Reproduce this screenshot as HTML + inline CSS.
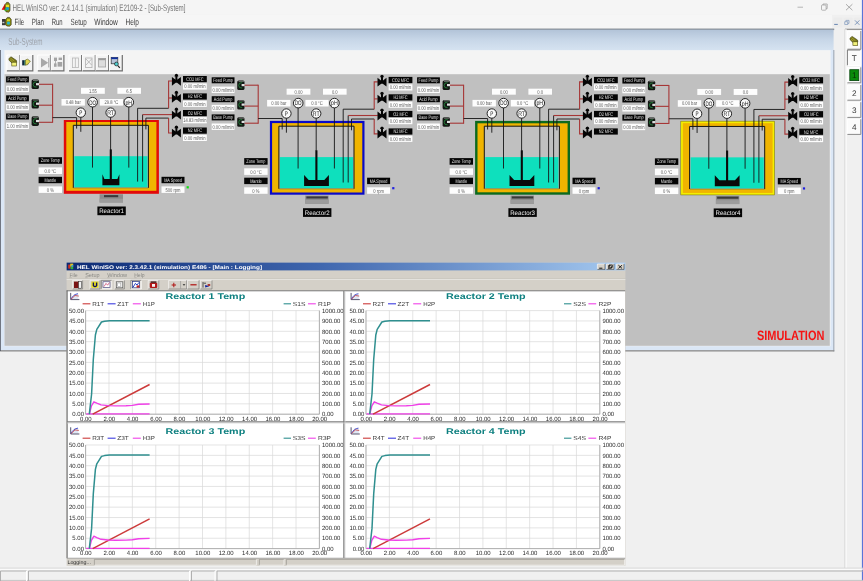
<!DOCTYPE html>
<html lang="en"><head><meta charset="utf-8"><title>HEL WinISO</title>
<style>html,body{margin:0;padding:0;background:#f0f0f0;overflow:hidden}svg{display:block;filter:blur(0.4px);text-rendering:geometricPrecision;font-family:'Liberation Sans', sans-serif}</style></head>
<body>
<svg width="863" height="581" viewBox="0 0 863 581">
<rect x="0.00" y="0.00" width="863.00" height="581.00" fill="#f0f0f0" />
<rect x="0.00" y="0.00" width="863.00" height="14.50" fill="#f5f5f5" />
<rect x="0.00" y="14.50" width="863.00" height="14.00" fill="#f6f6f6" />
<rect x="832.00" y="15.00" width="31.00" height="14.00" fill="#f0f0f0" />
<g transform="translate(1.6,2.2)"><path d="M0 7.6 L3.4 1.6 L4.6 7.8Z" fill="#e81010"/><path d="M3.6 2.2 L5 0.2 L6.8 0.2 L8.4 2.4 L8.4 8.6 L7 10 L4.4 9.6 L3.2 7Z" fill="#8a8a10" stroke="#2a2a0a" stroke-width="0.6"/><rect x="4.2" y="2.6" width="3.4" height="2.4" fill="#e8e020"/><circle cx="5.8" cy="6.4" r="1.7" fill="#18a0d8"/><rect x="3" y="6.6" width="1.8" height="2.2" fill="#30b030"/></g>
<text x="12.50" y="11.10" font-size="9.4" fill="#767676" textLength="173.00" lengthAdjust="spacingAndGlyphs" >HEL WinISO ver: 2.4.14.1 (simulation) E2109-2 - [Sub-System]</text>
<line x1="797.50" y1="7.20" x2="803.00" y2="7.20" stroke="#9a9a9a" stroke-width="0.7" />
<rect x="821.50" y="5.00" width="4.60" height="5.20" fill="none" stroke="#9a9a9a" stroke-width="0.7" rx="0.8"/>
<polyline points="823.00,5.00 823.00,4.00 827.20,4.00 827.20,8.60 826.10,8.60" fill="none" stroke="#9a9a9a" stroke-width="0.7" />
<line x1="846.00" y1="4.20" x2="852.40" y2="10.20" stroke="#8a8a8a" stroke-width="0.7" />
<line x1="852.40" y1="4.20" x2="846.00" y2="10.20" stroke="#8a8a8a" stroke-width="0.7" />
<g transform="translate(2.0,17.2)"><rect x="0" y="1.8" width="3.6" height="6.2" fill="#3a3a3a"/><rect x="0.4" y="4.6" width="2" height="1.4" fill="#c8c8c8"/><path d="M3.6 2.4 L5.4 0.2 L7.6 0.2 L9.2 2.2 L9.2 7.6 L7.6 9 L4.8 8.8 L3.6 7.4Z" fill="#8c8c10" stroke="#2a2a0a" stroke-width="0.6"/><rect x="5" y="2" width="3" height="2" fill="#d8d020"/><circle cx="6.5" cy="5.9" r="1.6" fill="#20b8d8"/></g>
<text x="14.50" y="24.60" font-size="9.0" fill="#3c3c3c" textLength="9.70" lengthAdjust="spacingAndGlyphs" >File</text>
<text x="31.80" y="24.60" font-size="9.0" fill="#3c3c3c" textLength="12.20" lengthAdjust="spacingAndGlyphs" >Plan</text>
<text x="51.80" y="24.60" font-size="9.0" fill="#3c3c3c" textLength="10.80" lengthAdjust="spacingAndGlyphs" >Run</text>
<text x="70.50" y="24.60" font-size="9.0" fill="#3c3c3c" textLength="16.30" lengthAdjust="spacingAndGlyphs" >Setup</text>
<text x="94.20" y="24.60" font-size="9.0" fill="#3c3c3c" textLength="23.60" lengthAdjust="spacingAndGlyphs" >Window</text>
<text x="125.50" y="24.60" font-size="9.0" fill="#3c3c3c" textLength="13.30" lengthAdjust="spacingAndGlyphs" >Help</text>
<rect x="833.40" y="17.60" width="9.20" height="10.00" fill="#ececec" rx="1"/>
<rect x="843.60" y="17.60" width="9.20" height="10.00" fill="#ececec" rx="1"/>
<rect x="853.80" y="17.60" width="9.20" height="10.00" fill="#ececec" rx="1"/>
<line x1="834.20" y1="24.40" x2="837.80" y2="24.40" stroke="#6684b0" stroke-width="1.0" />
<rect x="844.80" y="21.80" width="3.00" height="2.80" fill="none" stroke="#7f98bc" stroke-width="0.7" />
<polyline points="845.90,21.80 845.90,20.40 849.00,20.40 849.00,23.40 847.80,23.40" fill="none" stroke="#7f98bc" stroke-width="0.7" />
<line x1="855.00" y1="20.40" x2="859.40" y2="24.80" stroke="#6684b0" stroke-width="0.8" />
<line x1="859.40" y1="20.40" x2="855.00" y2="24.80" stroke="#6684b0" stroke-width="0.8" />
<rect x="861.90" y="0.00" width="1.10" height="581.00" fill="#5a74d8" />
<rect x="845.00" y="28.70" width="17.00" height="1.20" fill="#8c8c8c" />
<line x1="845.00" y1="29.00" x2="845.00" y2="568.00" stroke="#d0d0d0" stroke-width="1" />
<line x1="846.00" y1="29.00" x2="846.00" y2="568.00" stroke="#ffffff" stroke-width="1" />
<rect x="847.40" y="31.00" width="13.40" height="18.20" fill="#fbfbfb" />
<polyline points="847.40,49.20 847.40,31.00 860.80,31.00" fill="none" stroke="#ffffff" stroke-width="1" />
<polyline points="847.40,49.20 860.80,49.20 860.80,31.00" fill="none" stroke="#8a8a8a" stroke-width="1" />
<g transform="translate(849.90,36.40)"><path d="M0 1.9 L2.2 0 L7.6 3.6 L7.9 5.6 L3.2 6.2 L0.4 3.6Z" fill="#78761a" stroke="#3a3a0a" stroke-width="0.6"/><path d="M1.6 1.2 L5.6 4.4 M0.8 2.6 L4.2 5.4" stroke="#c8c440" stroke-width="0.5" fill="none"/><rect x="3.0" y="5.4" width="4.8" height="3.8" fill="#f2f27c" stroke="#4c4a10" stroke-width="0.6"/></g>
<rect x="847.40" y="50.00" width="13.40" height="15.60" fill="#fbfbfb" />
<polyline points="847.40,65.60 847.40,50.00 860.80,50.00" fill="none" stroke="#7c7c7c" stroke-width="1" />
<polyline points="847.40,65.60 860.80,65.60 860.80,50.00" fill="none" stroke="#ffffff" stroke-width="1" />
<text x="854.20" y="61.10" font-size="8.2" fill="#3a3a3a" text-anchor="middle" >T</text>
<rect x="847.40" y="67.30" width="13.40" height="15.50" fill="#fbfbfb" />
<polyline points="847.40,82.80 847.40,67.30 860.80,67.30" fill="none" stroke="#ffffff" stroke-width="1" />
<polyline points="847.40,82.80 860.80,82.80 860.80,67.30" fill="none" stroke="#8a8a8a" stroke-width="1" />
<rect x="849.80" y="69.70" width="9.00" height="10.90" fill="#0a8a0a" stroke="#04440a" stroke-width="0.8" />
<text x="854.20" y="78.35" font-size="8.2" fill="#063006" text-anchor="middle" >1</text>
<rect x="847.40" y="85.00" width="13.40" height="15.20" fill="#fbfbfb" />
<polyline points="847.40,100.20 847.40,85.00 860.80,85.00" fill="none" stroke="#ffffff" stroke-width="1" />
<polyline points="847.40,100.20 860.80,100.20 860.80,85.00" fill="none" stroke="#8a8a8a" stroke-width="1" />
<text x="854.20" y="95.90" font-size="8.2" fill="#3a3a3a" text-anchor="middle" >2</text>
<rect x="847.40" y="102.20" width="13.40" height="15.20" fill="#fbfbfb" />
<polyline points="847.40,117.40 847.40,102.20 860.80,102.20" fill="none" stroke="#ffffff" stroke-width="1" />
<polyline points="847.40,117.40 860.80,117.40 860.80,102.20" fill="none" stroke="#8a8a8a" stroke-width="1" />
<text x="854.20" y="113.10" font-size="8.2" fill="#3a3a3a" text-anchor="middle" >3</text>
<rect x="847.40" y="119.20" width="13.40" height="15.20" fill="#fbfbfb" />
<polyline points="847.40,134.40 847.40,119.20 860.80,119.20" fill="none" stroke="#ffffff" stroke-width="1" />
<polyline points="847.40,134.40 860.80,134.40 860.80,119.20" fill="none" stroke="#8a8a8a" stroke-width="1" />
<text x="854.20" y="130.10" font-size="8.2" fill="#3a3a3a" text-anchor="middle" >4</text>
<line x1="0.00" y1="580.40" x2="863.00" y2="580.40" stroke="#c4c4c4" stroke-width="1" />
<line x1="0.00" y1="568.20" x2="863.00" y2="568.20" stroke="#d0d0d0" stroke-width="1" />
<line x1="0.00" y1="569.20" x2="863.00" y2="569.20" stroke="#ffffff" stroke-width="1" />
<polyline points="0.50,581.00 0.50,571.00 26.50,571.00" fill="none" stroke="#a8a8a8" stroke-width="0.9" />
<line x1="26.50" y1="571.00" x2="26.50" y2="581.00" stroke="#ffffff" stroke-width="1" />
<polyline points="28.50,581.00 28.50,571.00 189.50,571.00" fill="none" stroke="#a8a8a8" stroke-width="0.9" />
<line x1="189.50" y1="571.00" x2="189.50" y2="581.00" stroke="#ffffff" stroke-width="1" />
<polyline points="191.50,581.00 191.50,571.00 215.00,571.00" fill="none" stroke="#a8a8a8" stroke-width="0.9" />
<line x1="215.00" y1="571.00" x2="215.00" y2="581.00" stroke="#ffffff" stroke-width="1" />
<polyline points="217.00,581.00 217.00,571.00 870.00,571.00" fill="none" stroke="#a8a8a8" stroke-width="0.9" />
<line x1="870.00" y1="571.00" x2="870.00" y2="581.00" stroke="#ffffff" stroke-width="1" />
<defs><linearGradient id="subg" x1="0" y1="0" x2="0" y2="1"><stop offset="0" stop-color="#b2c3d8"/><stop offset="0.5" stop-color="#c8d7e8"/><stop offset="1" stop-color="#d6e3f1"/></linearGradient><linearGradient id="standg" x1="0" y1="0" x2="0" y2="1"><stop offset="0" stop-color="#5a5a5a"/><stop offset="0.45" stop-color="#8c8c8c"/><stop offset="1" stop-color="#b4b4b4"/></linearGradient></defs>
<rect x="0.00" y="28.60" width="834.20" height="1.50" fill="#7c828a" />
<rect x="0.00" y="29.60" width="833.60" height="21.00" fill="url(#subg)" />
<rect x="0.00" y="50.00" width="833.60" height="300.60" fill="#dbe7f6" />
<rect x="833.40" y="50.00" width="0.90" height="301.40" fill="#8e98a8" />
<rect x="0.00" y="350.20" width="834.30" height="1.30" fill="#8a8a8a" />
<rect x="0.00" y="50.00" width="0.75" height="301.00" fill="#4e525c" />
<text x="8.30" y="44.90" font-size="10.2" fill="#9ea3ab" textLength="34.20" lengthAdjust="spacingAndGlyphs" >Sub-System</text>
<rect x="4.40" y="50.20" width="826.20" height="296.00" fill="#f4f4f4" />
<rect x="4.50" y="74.20" width="825.30" height="271.60" fill="#c0c0c0" />
<rect x="6.90" y="55.00" width="12.70" height="15.80" fill="#f3f3f3" />
<polyline points="6.90,70.80 6.90,55.00 19.60,55.00" fill="none" stroke="#ffffff" stroke-width="1" />
<polyline points="6.90,70.80 19.60,70.80 19.60,55.00" fill="none" stroke="#6e6e6e" stroke-width="1.2" />
<rect x="20.10" y="55.00" width="12.70" height="15.80" fill="#f3f3f3" />
<polyline points="20.10,70.80 20.10,55.00 32.80,55.00" fill="none" stroke="#ffffff" stroke-width="1" />
<polyline points="20.10,70.80 32.80,70.80 32.80,55.00" fill="none" stroke="#6e6e6e" stroke-width="1.2" />
<rect x="37.80" y="55.00" width="12.70" height="15.80" fill="#f3f3f3" />
<polyline points="37.80,70.80 37.80,55.00 50.50,55.00" fill="none" stroke="#ffffff" stroke-width="1" />
<polyline points="37.80,70.80 50.50,70.80 50.50,55.00" fill="none" stroke="#6e6e6e" stroke-width="1.2" />
<rect x="51.20" y="55.00" width="12.70" height="15.80" fill="#f3f3f3" />
<polyline points="51.20,70.80 51.20,55.00 63.90,55.00" fill="none" stroke="#ffffff" stroke-width="1" />
<polyline points="51.20,70.80 63.90,70.80 63.90,55.00" fill="none" stroke="#6e6e6e" stroke-width="1.2" />
<rect x="69.00" y="55.00" width="12.70" height="15.80" fill="#f3f3f3" />
<polyline points="69.00,70.80 69.00,55.00 81.70,55.00" fill="none" stroke="#ffffff" stroke-width="1" />
<polyline points="69.00,70.80 81.70,70.80 81.70,55.00" fill="none" stroke="#6e6e6e" stroke-width="1.2" />
<rect x="82.60" y="55.00" width="12.70" height="15.80" fill="#f3f3f3" />
<polyline points="82.60,70.80 82.60,55.00 95.30,55.00" fill="none" stroke="#ffffff" stroke-width="1" />
<polyline points="82.60,70.80 95.30,70.80 95.30,55.00" fill="none" stroke="#6e6e6e" stroke-width="1.2" />
<rect x="96.00" y="55.00" width="12.70" height="15.80" fill="#f3f3f3" />
<polyline points="96.00,70.80 96.00,55.00 108.70,55.00" fill="none" stroke="#ffffff" stroke-width="1" />
<polyline points="96.00,70.80 108.70,70.80 108.70,55.00" fill="none" stroke="#6e6e6e" stroke-width="1.2" />
<rect x="109.60" y="55.00" width="12.70" height="15.80" fill="#f3f3f3" />
<polyline points="109.60,70.80 109.60,55.00 122.30,55.00" fill="none" stroke="#ffffff" stroke-width="1" />
<polyline points="109.60,70.80 122.30,70.80 122.30,55.00" fill="none" stroke="#6e6e6e" stroke-width="1.2" />
<g transform="translate(8.80,56.80)"><path d="M0 1.9 L2.2 0 L7.6 3.6 L7.9 5.6 L3.2 6.2 L0.4 3.6Z" fill="#78761a" stroke="#3a3a0a" stroke-width="0.6"/><path d="M1.6 1.2 L5.6 4.4 M0.8 2.6 L4.2 5.4" stroke="#c8c440" stroke-width="0.5" fill="none"/><rect x="3.0" y="5.4" width="4.8" height="3.8" fill="#f2f27c" stroke="#4c4a10" stroke-width="0.6"/></g>
<g transform="translate(22,59)"><rect x="0.2" y="1.2" width="2.5" height="5.2" fill="#10283a"/><rect x="2.6" y="1.2" width="0.9" height="5.2" fill="#20a078"/><path d="M3.4 1 L5.6 0.2 L7 1.2 L8.4 2.4 L6.6 4 L5.8 5.6 L3.4 6.2Z" fill="#e0d850" stroke="#4a4a10" stroke-width="0.6"/></g>
<path d="M41 58 L41 67.4 L48.2 62.7Z" fill="#a8a8a8"/><rect x="48.2" y="58" width="1.1" height="9.4" fill="#a8a8a8"/>
<g fill="#a4a4a4"><rect x="54" y="57.6" width="3" height="3.4"/><rect x="58.6" y="57.6" width="3.4" height="2.4"/><rect x="57.6" y="62" width="4.6" height="4.6"/><rect x="54" y="63.4" width="2.6" height="3.4"/><rect x="55" y="60" width="0.8" height="4"/></g>
<g fill="none" stroke="#b8b8b8" stroke-width="0.8"><rect x="72.4" y="58" width="6" height="9.6"/><line x1="75.4" y1="58" x2="75.4" y2="67.6"/></g>
<g fill="none" stroke="#b0b0b0" stroke-width="0.8"><rect x="85.6" y="58" width="6.4" height="9.6"/><path d="M86 59 L91.6 65 M91.6 59 L86 65"/></g>
<g><rect x="98.6" y="58.4" width="7" height="8.6" fill="#dcdcdc" stroke="#a0a0a0" stroke-width="0.8"/><rect x="98.6" y="58.4" width="7" height="1.8" fill="#9a9a9a"/></g>
<g><rect x="111.2" y="57.4" width="6.6" height="6.4" fill="#b8c4d8" stroke="#333" stroke-width="0.7"/><rect x="111.2" y="57.4" width="6.6" height="1.7" fill="#1030a0"/><circle cx="116.4" cy="64" r="1.9" fill="#50d0d0" stroke="#222" stroke-width="0.7"/><line x1="117.8" y1="65.6" x2="119.8" y2="67.8" stroke="#222" stroke-width="1.2"/></g>
<text x="756.90" y="339.50" font-size="13.6" fill="#f41414" font-weight="bold" textLength="67.50" lengthAdjust="spacingAndGlyphs" >SIMULATION</text>
<g transform="translate(0.00,0.00)">
<rect x="6.10" y="76.40" width="22.80" height="6.00" fill="#050505" />
<text x="7.62" y="81.22" font-size="5.2" fill="#e4e4e4" textLength="19.76" lengthAdjust="spacingAndGlyphs" >Feed Pump</text>
<rect x="6.10" y="85.70" width="22.80" height="6.40" fill="#fdfdfd" />
<text x="6.84" y="90.88" font-size="5.5" fill="#5a5a5a" textLength="21.32" lengthAdjust="spacingAndGlyphs" >0.00 ml/min</text>
<rect x="6.10" y="95.30" width="22.80" height="6.00" fill="#050505" />
<text x="8.26" y="100.12" font-size="5.2" fill="#e4e4e4" textLength="18.48" lengthAdjust="spacingAndGlyphs" >Acid Pump</text>
<rect x="6.10" y="104.00" width="22.80" height="6.40" fill="#fdfdfd" />
<text x="6.84" y="109.18" font-size="5.5" fill="#5a5a5a" textLength="21.32" lengthAdjust="spacingAndGlyphs" >0.00 ml/min</text>
<rect x="6.10" y="113.50" width="22.80" height="6.00" fill="#050505" />
<text x="7.62" y="118.32" font-size="5.2" fill="#e4e4e4" textLength="19.76" lengthAdjust="spacingAndGlyphs" >Base Pump</text>
<rect x="6.10" y="122.60" width="22.80" height="6.40" fill="#fdfdfd" />
<text x="6.84" y="127.78" font-size="5.5" fill="#5a5a5a" textLength="21.32" lengthAdjust="spacingAndGlyphs" >1.00 ml/min</text>
<g transform="translate(35.40,84.30)"><rect x="-3.8" y="-4.8" width="7.3" height="9.6" rx="1.6" fill="#131713"/><rect x="-2.4" y="-4.5" width="5.4" height="1.2" fill="#6a6e6a"/><path d="M1.2 -2.5 Q-2.3 -2.9 -2.3 0.2 Q-2.3 3.2 1.2 2.8" fill="none" stroke="#23873c" stroke-width="0.85"/><rect x="0.6" y="-1.2" width="3.1" height="2.2" fill="#e0e0e0"/></g>
<g transform="translate(35.40,103.80)"><rect x="-3.8" y="-4.8" width="7.3" height="9.6" rx="1.6" fill="#131713"/><rect x="-2.4" y="-4.5" width="5.4" height="1.2" fill="#6a6e6a"/><path d="M1.2 -2.5 Q-2.3 -2.9 -2.3 0.2 Q-2.3 3.2 1.2 2.8" fill="none" stroke="#23873c" stroke-width="0.85"/><rect x="0.6" y="-1.2" width="3.1" height="2.2" fill="#e0e0e0"/></g>
<g transform="translate(35.40,121.10)"><rect x="-3.8" y="-4.8" width="7.3" height="9.6" rx="1.6" fill="#131713"/><rect x="-2.4" y="-4.5" width="5.4" height="1.2" fill="#6a6e6a"/><path d="M1.2 -2.5 Q-2.3 -2.9 -2.3 0.2 Q-2.3 3.2 1.2 2.8" fill="none" stroke="#23873c" stroke-width="0.85"/><rect x="0.6" y="-1.2" width="3.1" height="2.2" fill="#e0e0e0"/></g>
<line x1="39.00" y1="84.30" x2="52.60" y2="84.30" stroke="#a63636" stroke-width="1.1" />
<line x1="39.00" y1="105.20" x2="52.60" y2="105.20" stroke="#a63636" stroke-width="1.1" />
<line x1="39.00" y1="122.30" x2="52.60" y2="122.30" stroke="#a63636" stroke-width="1.1" />
<line x1="52.60" y1="83.80" x2="52.60" y2="122.80" stroke="#a63636" stroke-width="1.1" />
<rect x="63.80" y="120.00" width="95.10" height="73.80" fill="#e20a0a" />
<rect x="66.30" y="122.00" width="90.10" height="68.80" fill="#f0b400" />
<rect x="73.30" y="125.40" width="75.00" height="62.30" fill="#c0c0c0" />
<rect x="74.30" y="156.20" width="73.20" height="31.20" fill="#0ee0bd" />
<polyline points="73.30,187.90 73.30,125.30 148.40,125.30 148.40,187.90" fill="none" stroke="#151515" stroke-width="1.0" />
<line x1="73.30" y1="187.90" x2="148.40" y2="187.90" stroke="#6a6a40" stroke-width="0.6" />
<polyline points="52.60,117.60 76.60,117.60 76.60,128.60" fill="none" stroke="#151515" stroke-width="0.9" />
<polyline points="137.60,181.60 137.60,108.30 168.60,108.30" fill="none" stroke="#151515" stroke-width="0.9" />
<line x1="142.60" y1="181.60" x2="142.60" y2="114.60" stroke="#151515" stroke-width="0.9" />
<polyline points="145.90,129.40 145.90,118.10 168.60,118.10" fill="none" stroke="#151515" stroke-width="0.9" />
<polyline points="172.20,81.00 168.60,81.00 168.60,108.30" fill="none" stroke="#a63636" stroke-width="1.1" />
<line x1="168.60" y1="98.00" x2="172.20" y2="98.00" stroke="#a63636" stroke-width="1.1" />
<line x1="142.60" y1="114.60" x2="172.20" y2="114.60" stroke="#a63636" stroke-width="1.1" />
<polyline points="168.60,118.00 168.60,133.00 172.20,133.00" fill="none" stroke="#a63636" stroke-width="1.1" />
<line x1="80.80" y1="117.00" x2="80.80" y2="131.80" stroke="#151515" stroke-width="0.9" />
<line x1="92.50" y1="107.00" x2="92.50" y2="167.60" stroke="#151515" stroke-width="0.9" />
<line x1="128.80" y1="107.00" x2="128.80" y2="167.60" stroke="#151515" stroke-width="0.9" />
<line x1="110.60" y1="117.00" x2="110.60" y2="150.00" stroke="#151515" stroke-width="0.9" />
<rect x="109.75" y="149.40" width="2.10" height="30.60" fill="#0a0a0a" />
<path d="M102.4 174.2 L104.4 179.0 L117.4 179.0 L119.4 174.2 L119.4 185.2 L102.4 185.2Z" fill="#0a0a0a"/>
<circle cx="80.80" cy="112.60" r="4.7" fill="#fafafa" stroke="#1a1a1a" stroke-width="0.95"/>
<text x="79.25" y="114.90" font-size="6.6" fill="#1c1c1c" textLength="3.10" lengthAdjust="spacingAndGlyphs" >P</text>
<circle cx="92.60" cy="102.20" r="4.8" fill="#fafafa" stroke="#1a1a1a" stroke-width="0.95"/>
<text x="89.20" y="104.50" font-size="6.6" fill="#1c1c1c" textLength="6.80" lengthAdjust="spacingAndGlyphs" >DO</text>
<circle cx="110.60" cy="112.60" r="4.7" fill="#fafafa" stroke="#1a1a1a" stroke-width="0.95"/>
<text x="107.20" y="114.90" font-size="6.6" fill="#1c1c1c" textLength="6.80" lengthAdjust="spacingAndGlyphs" >RT</text>
<circle cx="128.80" cy="102.20" r="4.8" fill="#fafafa" stroke="#1a1a1a" stroke-width="0.95"/>
<text x="125.40" y="104.50" font-size="6.6" fill="#1c1c1c" textLength="6.80" lengthAdjust="spacingAndGlyphs" >pH</text>
<rect x="81.00" y="87.80" width="23.80" height="6.00" fill="#fdfdfd" />
<text x="88.89" y="92.78" font-size="5.5" fill="#5a5a5a" textLength="8.03" lengthAdjust="spacingAndGlyphs" >1.55</text>
<rect x="117.40" y="87.80" width="23.60" height="6.00" fill="#fdfdfd" />
<text x="126.33" y="92.78" font-size="5.5" fill="#5a5a5a" textLength="5.73" lengthAdjust="spacingAndGlyphs" >6.5</text>
<rect x="61.50" y="99.00" width="23.40" height="6.60" fill="#fdfdfd" />
<text x="65.63" y="104.28" font-size="5.5" fill="#5a5a5a" textLength="15.13" lengthAdjust="spacingAndGlyphs" >0.48 bar</text>
<rect x="99.80" y="99.00" width="23.20" height="6.60" fill="#fdfdfd" />
<text x="104.50" y="104.28" font-size="5.5" fill="#5a5a5a" textLength="13.80" lengthAdjust="spacingAndGlyphs" >29.8 °C</text>
<g transform="translate(176.40,80.80)" fill="#050505"><path d="M-4.5 -3.9 L-0.7 -1.0 L0.7 -1.0 L4.5 -3.9 L4.5 4.9 L0.7 2.0 L-0.7 2.0 L-4.5 4.9Z"/><rect x="-1.0" y="-5.0" width="2.0" height="6"/><path d="M-1.9 -4.4 Q-1.9 -7.0 0 -7.0 Q1.9 -7.0 1.9 -4.4Z"/></g>
<g transform="translate(176.40,97.80)" fill="#050505"><path d="M-4.5 -3.9 L-0.7 -1.0 L0.7 -1.0 L4.5 -3.9 L4.5 4.9 L0.7 2.0 L-0.7 2.0 L-4.5 4.9Z"/><rect x="-1.0" y="-5.0" width="2.0" height="6"/><path d="M-1.9 -4.4 Q-1.9 -7.0 0 -7.0 Q1.9 -7.0 1.9 -4.4Z"/></g>
<g transform="translate(176.40,114.60)" fill="#050505"><path d="M-4.5 -3.9 L-0.7 -1.0 L0.7 -1.0 L4.5 -3.9 L4.5 4.9 L0.7 2.0 L-0.7 2.0 L-4.5 4.9Z"/><rect x="-1.0" y="-5.0" width="2.0" height="6"/><path d="M-1.9 -4.4 Q-1.9 -7.0 0 -7.0 Q1.9 -7.0 1.9 -4.4Z"/></g>
<g transform="translate(176.40,132.60)" fill="#050505"><path d="M-4.5 -3.9 L-0.7 -1.0 L0.7 -1.0 L4.5 -3.9 L4.5 4.9 L0.7 2.0 L-0.7 2.0 L-4.5 4.9Z"/><rect x="-1.0" y="-5.0" width="2.0" height="6"/><path d="M-1.9 -4.4 Q-1.9 -7.0 0 -7.0 Q1.9 -7.0 1.9 -4.4Z"/></g>
<rect x="183.00" y="76.00" width="23.80" height="6.20" fill="#050505" />
<text x="186.30" y="80.92" font-size="5.2" fill="#e4e4e4" textLength="17.20" lengthAdjust="spacingAndGlyphs" >CO2 MFC</text>
<rect x="183.00" y="83.40" width="23.80" height="6.20" fill="#fdfdfd" />
<text x="184.24" y="88.48" font-size="5.5" fill="#5a5a5a" textLength="21.32" lengthAdjust="spacingAndGlyphs" >0.00 ml/min</text>
<rect x="183.00" y="93.40" width="23.80" height="6.20" fill="#050505" />
<text x="187.79" y="98.32" font-size="5.2" fill="#e4e4e4" textLength="14.23" lengthAdjust="spacingAndGlyphs" >H2 MFC</text>
<rect x="183.00" y="100.70" width="23.80" height="6.20" fill="#fdfdfd" />
<text x="184.24" y="105.78" font-size="5.5" fill="#5a5a5a" textLength="21.32" lengthAdjust="spacingAndGlyphs" >0.00 ml/min</text>
<rect x="183.00" y="110.00" width="23.80" height="6.20" fill="#050505" />
<text x="187.68" y="114.92" font-size="5.2" fill="#e4e4e4" textLength="14.44" lengthAdjust="spacingAndGlyphs" >O2 MFC</text>
<rect x="183.00" y="117.10" width="23.80" height="6.20" fill="#fdfdfd" />
<text x="183.30" y="122.18" font-size="5.5" fill="#5a5a5a" textLength="23.20" lengthAdjust="spacingAndGlyphs" >14.83 ml/min</text>
<rect x="183.00" y="127.50" width="23.80" height="6.20" fill="#050505" />
<text x="187.79" y="132.42" font-size="5.2" fill="#e4e4e4" textLength="14.23" lengthAdjust="spacingAndGlyphs" >N2 MFC</text>
<rect x="183.00" y="134.80" width="23.80" height="6.20" fill="#fdfdfd" />
<text x="184.24" y="139.88" font-size="5.5" fill="#5a5a5a" textLength="21.32" lengthAdjust="spacingAndGlyphs" >0.00 ml/min</text>
<rect x="38.60" y="157.20" width="23.40" height="6.60" fill="#050505" />
<text x="40.78" y="162.32" font-size="5.2" fill="#e4e4e4" textLength="19.05" lengthAdjust="spacingAndGlyphs" >Zone Temp</text>
<rect x="38.60" y="167.40" width="23.40" height="6.60" fill="#fdfdfd" />
<text x="44.55" y="172.68" font-size="5.5" fill="#5a5a5a" textLength="11.51" lengthAdjust="spacingAndGlyphs" >0.0 °C</text>
<rect x="38.60" y="176.80" width="23.40" height="6.40" fill="#050505" />
<text x="44.56" y="181.82" font-size="5.2" fill="#e4e4e4" textLength="11.47" lengthAdjust="spacingAndGlyphs" >Mantle</text>
<rect x="38.60" y="186.40" width="23.40" height="6.50" fill="#fdfdfd" />
<text x="46.75" y="191.63" font-size="5.5" fill="#5a5a5a" textLength="7.11" lengthAdjust="spacingAndGlyphs" >0 %</text>
<rect x="161.50" y="176.80" width="23.00" height="6.40" fill="#050505" />
<text x="164.18" y="181.82" font-size="5.2" fill="#e4e4e4" textLength="17.63" lengthAdjust="spacingAndGlyphs" >MA Speed</text>
<rect x="161.50" y="186.40" width="23.00" height="6.50" fill="#fdfdfd" />
<text x="165.43" y="191.63" font-size="5.5" fill="#5a5a5a" textLength="15.13" lengthAdjust="spacingAndGlyphs" >500 rpm</text>
<rect x="186.60" y="186.20" width="2.20" height="2.20" fill="#10e010" />
<g transform="translate(0,0.10)"><rect x="99.6" y="194.2" width="23.4" height="8.2" fill="#8c8c8c"/><rect x="99.6" y="198.6" width="23.4" height="3.8" fill="#9c9c9c"/>
<rect x="104.00" y="195.00" width="14.20" height="2.10" fill="#3a3a3a" />
</g>
<rect x="97.40" y="206.50" width="28.40" height="8.70" fill="#050505" />
<text x="99.20" y="213.40" font-size="6.4" fill="#f0f0f0" textLength="24.80" lengthAdjust="spacingAndGlyphs" >Reactor1</text>
</g>
<g transform="translate(205.60,0.90)">
<rect x="6.10" y="76.40" width="22.80" height="6.00" fill="#050505" />
<text x="7.62" y="81.22" font-size="5.2" fill="#e4e4e4" textLength="19.76" lengthAdjust="spacingAndGlyphs" >Feed Pump</text>
<rect x="6.10" y="85.70" width="22.80" height="6.40" fill="#fdfdfd" />
<text x="6.84" y="90.88" font-size="5.5" fill="#5a5a5a" textLength="21.32" lengthAdjust="spacingAndGlyphs" >0.00 ml/min</text>
<rect x="6.10" y="95.30" width="22.80" height="6.00" fill="#050505" />
<text x="8.26" y="100.12" font-size="5.2" fill="#e4e4e4" textLength="18.48" lengthAdjust="spacingAndGlyphs" >Acid Pump</text>
<rect x="6.10" y="104.00" width="22.80" height="6.40" fill="#fdfdfd" />
<text x="6.84" y="109.18" font-size="5.5" fill="#5a5a5a" textLength="21.32" lengthAdjust="spacingAndGlyphs" >0.00 ml/min</text>
<rect x="6.10" y="113.50" width="22.80" height="6.00" fill="#050505" />
<text x="7.62" y="118.32" font-size="5.2" fill="#e4e4e4" textLength="19.76" lengthAdjust="spacingAndGlyphs" >Base Pump</text>
<rect x="6.10" y="122.60" width="22.80" height="6.40" fill="#fdfdfd" />
<text x="6.84" y="127.78" font-size="5.5" fill="#5a5a5a" textLength="21.32" lengthAdjust="spacingAndGlyphs" >0.00 ml/min</text>
<g transform="translate(35.40,84.30)"><rect x="-3.8" y="-4.8" width="7.3" height="9.6" rx="1.6" fill="#131713"/><rect x="-2.4" y="-4.5" width="5.4" height="1.2" fill="#6a6e6a"/><path d="M1.2 -2.5 Q-2.3 -2.9 -2.3 0.2 Q-2.3 3.2 1.2 2.8" fill="none" stroke="#23873c" stroke-width="0.85"/><rect x="0.6" y="-1.2" width="3.1" height="2.2" fill="#e0e0e0"/></g>
<g transform="translate(35.40,103.80)"><rect x="-3.8" y="-4.8" width="7.3" height="9.6" rx="1.6" fill="#131713"/><rect x="-2.4" y="-4.5" width="5.4" height="1.2" fill="#6a6e6a"/><path d="M1.2 -2.5 Q-2.3 -2.9 -2.3 0.2 Q-2.3 3.2 1.2 2.8" fill="none" stroke="#23873c" stroke-width="0.85"/><rect x="0.6" y="-1.2" width="3.1" height="2.2" fill="#e0e0e0"/></g>
<g transform="translate(35.40,121.10)"><rect x="-3.8" y="-4.8" width="7.3" height="9.6" rx="1.6" fill="#131713"/><rect x="-2.4" y="-4.5" width="5.4" height="1.2" fill="#6a6e6a"/><path d="M1.2 -2.5 Q-2.3 -2.9 -2.3 0.2 Q-2.3 3.2 1.2 2.8" fill="none" stroke="#23873c" stroke-width="0.85"/><rect x="0.6" y="-1.2" width="3.1" height="2.2" fill="#e0e0e0"/></g>
<line x1="39.00" y1="84.30" x2="52.60" y2="84.30" stroke="#a63636" stroke-width="1.1" />
<line x1="39.00" y1="105.20" x2="52.60" y2="105.20" stroke="#a63636" stroke-width="1.1" />
<line x1="39.00" y1="122.30" x2="52.60" y2="122.30" stroke="#a63636" stroke-width="1.1" />
<line x1="52.60" y1="83.80" x2="52.60" y2="122.80" stroke="#a63636" stroke-width="1.1" />
<rect x="64.30" y="120.00" width="94.60" height="73.80" fill="#0a0ac8" />
<rect x="66.50" y="122.20" width="90.20" height="69.40" fill="#f0b400" />
<rect x="73.30" y="125.40" width="75.00" height="62.30" fill="#c0c0c0" />
<rect x="74.30" y="156.20" width="73.20" height="31.20" fill="#0ee0bd" />
<polyline points="73.30,187.90 73.30,125.30 148.40,125.30 148.40,187.90" fill="none" stroke="#151515" stroke-width="1.0" />
<line x1="73.30" y1="187.90" x2="148.40" y2="187.90" stroke="#6a6a40" stroke-width="0.6" />
<polyline points="52.60,117.60 76.60,117.60 76.60,128.60" fill="none" stroke="#151515" stroke-width="0.9" />
<polyline points="137.60,181.60 137.60,108.30 168.60,108.30" fill="none" stroke="#151515" stroke-width="0.9" />
<line x1="142.60" y1="181.60" x2="142.60" y2="114.60" stroke="#151515" stroke-width="0.9" />
<polyline points="145.90,129.40 145.90,118.10 168.60,118.10" fill="none" stroke="#151515" stroke-width="0.9" />
<polyline points="172.20,81.00 168.60,81.00 168.60,108.30" fill="none" stroke="#a63636" stroke-width="1.1" />
<line x1="168.60" y1="98.00" x2="172.20" y2="98.00" stroke="#a63636" stroke-width="1.1" />
<line x1="142.60" y1="114.60" x2="172.20" y2="114.60" stroke="#a63636" stroke-width="1.1" />
<polyline points="168.60,118.00 168.60,133.00 172.20,133.00" fill="none" stroke="#a63636" stroke-width="1.1" />
<line x1="80.80" y1="117.00" x2="80.80" y2="131.80" stroke="#151515" stroke-width="0.9" />
<line x1="92.50" y1="107.00" x2="92.50" y2="167.60" stroke="#151515" stroke-width="0.9" />
<line x1="128.80" y1="107.00" x2="128.80" y2="167.60" stroke="#151515" stroke-width="0.9" />
<line x1="110.60" y1="117.00" x2="110.60" y2="150.00" stroke="#151515" stroke-width="0.9" />
<rect x="109.75" y="149.40" width="2.10" height="30.60" fill="#0a0a0a" />
<path d="M98.5 174.2 L103.1 179.0 L118.7 179.0 L123.3 174.2 L123.3 185.2 L98.5 185.2Z" fill="#0a0a0a"/>
<circle cx="80.80" cy="112.60" r="4.7" fill="#fafafa" stroke="#1a1a1a" stroke-width="0.95"/>
<text x="79.25" y="114.90" font-size="6.6" fill="#1c1c1c" textLength="3.10" lengthAdjust="spacingAndGlyphs" >P</text>
<circle cx="92.60" cy="102.20" r="4.8" fill="#fafafa" stroke="#1a1a1a" stroke-width="0.95"/>
<text x="89.20" y="104.50" font-size="6.6" fill="#1c1c1c" textLength="6.80" lengthAdjust="spacingAndGlyphs" >DO</text>
<circle cx="110.60" cy="112.60" r="4.7" fill="#fafafa" stroke="#1a1a1a" stroke-width="0.95"/>
<text x="107.20" y="114.90" font-size="6.6" fill="#1c1c1c" textLength="6.80" lengthAdjust="spacingAndGlyphs" >RT</text>
<circle cx="128.80" cy="102.20" r="4.8" fill="#fafafa" stroke="#1a1a1a" stroke-width="0.95"/>
<text x="125.40" y="104.50" font-size="6.6" fill="#1c1c1c" textLength="6.80" lengthAdjust="spacingAndGlyphs" >pH</text>
<rect x="81.00" y="87.80" width="23.80" height="6.00" fill="#fdfdfd" />
<text x="88.89" y="92.78" font-size="5.5" fill="#5a5a5a" textLength="8.03" lengthAdjust="spacingAndGlyphs" >0.00</text>
<rect x="117.40" y="87.80" width="23.60" height="6.00" fill="#fdfdfd" />
<text x="126.33" y="92.78" font-size="5.5" fill="#5a5a5a" textLength="5.73" lengthAdjust="spacingAndGlyphs" >0.0</text>
<rect x="61.50" y="99.00" width="23.40" height="6.60" fill="#fdfdfd" />
<text x="65.63" y="104.28" font-size="5.5" fill="#5a5a5a" textLength="15.13" lengthAdjust="spacingAndGlyphs" >0.00 bar</text>
<rect x="99.80" y="99.00" width="23.20" height="6.60" fill="#fdfdfd" />
<text x="105.65" y="104.28" font-size="5.5" fill="#5a5a5a" textLength="11.51" lengthAdjust="spacingAndGlyphs" >0.0 °C</text>
<g transform="translate(176.40,80.80)" fill="#050505"><path d="M-4.5 -3.9 L-0.7 -1.0 L0.7 -1.0 L4.5 -3.9 L4.5 4.9 L0.7 2.0 L-0.7 2.0 L-4.5 4.9Z"/><rect x="-1.0" y="-5.0" width="2.0" height="6"/><path d="M-1.9 -4.4 Q-1.9 -7.0 0 -7.0 Q1.9 -7.0 1.9 -4.4Z"/></g>
<g transform="translate(176.40,97.80)" fill="#050505"><path d="M-4.5 -3.9 L-0.7 -1.0 L0.7 -1.0 L4.5 -3.9 L4.5 4.9 L0.7 2.0 L-0.7 2.0 L-4.5 4.9Z"/><rect x="-1.0" y="-5.0" width="2.0" height="6"/><path d="M-1.9 -4.4 Q-1.9 -7.0 0 -7.0 Q1.9 -7.0 1.9 -4.4Z"/></g>
<g transform="translate(176.40,114.60)" fill="#050505"><path d="M-4.5 -3.9 L-0.7 -1.0 L0.7 -1.0 L4.5 -3.9 L4.5 4.9 L0.7 2.0 L-0.7 2.0 L-4.5 4.9Z"/><rect x="-1.0" y="-5.0" width="2.0" height="6"/><path d="M-1.9 -4.4 Q-1.9 -7.0 0 -7.0 Q1.9 -7.0 1.9 -4.4Z"/></g>
<g transform="translate(176.40,132.60)" fill="#050505"><path d="M-4.5 -3.9 L-0.7 -1.0 L0.7 -1.0 L4.5 -3.9 L4.5 4.9 L0.7 2.0 L-0.7 2.0 L-4.5 4.9Z"/><rect x="-1.0" y="-5.0" width="2.0" height="6"/><path d="M-1.9 -4.4 Q-1.9 -7.0 0 -7.0 Q1.9 -7.0 1.9 -4.4Z"/></g>
<rect x="183.00" y="76.00" width="23.80" height="6.20" fill="#050505" />
<text x="186.30" y="80.92" font-size="5.2" fill="#e4e4e4" textLength="17.20" lengthAdjust="spacingAndGlyphs" >CO2 MFC</text>
<rect x="183.00" y="83.40" width="23.80" height="6.20" fill="#fdfdfd" />
<text x="184.24" y="88.48" font-size="5.5" fill="#5a5a5a" textLength="21.32" lengthAdjust="spacingAndGlyphs" >0.00 ml/min</text>
<rect x="183.00" y="93.40" width="23.80" height="6.20" fill="#050505" />
<text x="187.79" y="98.32" font-size="5.2" fill="#e4e4e4" textLength="14.23" lengthAdjust="spacingAndGlyphs" >H2 MFC</text>
<rect x="183.00" y="100.70" width="23.80" height="6.20" fill="#fdfdfd" />
<text x="184.24" y="105.78" font-size="5.5" fill="#5a5a5a" textLength="21.32" lengthAdjust="spacingAndGlyphs" >0.00 ml/min</text>
<rect x="183.00" y="110.00" width="23.80" height="6.20" fill="#050505" />
<text x="187.68" y="114.92" font-size="5.2" fill="#e4e4e4" textLength="14.44" lengthAdjust="spacingAndGlyphs" >O2 MFC</text>
<rect x="183.00" y="117.10" width="23.80" height="6.20" fill="#fdfdfd" />
<text x="184.24" y="122.18" font-size="5.5" fill="#5a5a5a" textLength="21.32" lengthAdjust="spacingAndGlyphs" >0.00 ml/min</text>
<rect x="183.00" y="127.50" width="23.80" height="6.20" fill="#050505" />
<text x="187.79" y="132.42" font-size="5.2" fill="#e4e4e4" textLength="14.23" lengthAdjust="spacingAndGlyphs" >N2 MFC</text>
<rect x="183.00" y="134.80" width="23.80" height="6.20" fill="#fdfdfd" />
<text x="184.24" y="139.88" font-size="5.5" fill="#5a5a5a" textLength="21.32" lengthAdjust="spacingAndGlyphs" >0.00 ml/min</text>
<rect x="38.60" y="157.20" width="23.40" height="6.60" fill="#050505" />
<text x="40.78" y="162.32" font-size="5.2" fill="#e4e4e4" textLength="19.05" lengthAdjust="spacingAndGlyphs" >Zone Temp</text>
<rect x="38.60" y="167.40" width="23.40" height="6.60" fill="#fdfdfd" />
<text x="44.55" y="172.68" font-size="5.5" fill="#5a5a5a" textLength="11.51" lengthAdjust="spacingAndGlyphs" >0.0 °C</text>
<rect x="38.60" y="176.80" width="23.40" height="6.40" fill="#050505" />
<text x="44.56" y="181.82" font-size="5.2" fill="#e4e4e4" textLength="11.47" lengthAdjust="spacingAndGlyphs" >Mantle</text>
<rect x="38.60" y="186.40" width="23.40" height="6.50" fill="#fdfdfd" />
<text x="46.75" y="191.63" font-size="5.5" fill="#5a5a5a" textLength="7.11" lengthAdjust="spacingAndGlyphs" >0 %</text>
<rect x="161.50" y="176.80" width="23.00" height="6.40" fill="#050505" />
<text x="164.18" y="181.82" font-size="5.2" fill="#e4e4e4" textLength="17.63" lengthAdjust="spacingAndGlyphs" >MA Speed</text>
<rect x="161.50" y="186.40" width="23.00" height="6.50" fill="#fdfdfd" />
<text x="167.73" y="191.63" font-size="5.5" fill="#5a5a5a" textLength="10.54" lengthAdjust="spacingAndGlyphs" >0 rpm</text>
<rect x="186.60" y="186.20" width="2.20" height="2.20" fill="#2020e0" />
<g transform="translate(0,0.50)"><rect x="99.6" y="194.2" width="23.4" height="8.2" fill="#8c8c8c"/><rect x="99.6" y="198.6" width="23.4" height="3.8" fill="#9c9c9c"/>
<rect x="100.80" y="195.00" width="21.40" height="2.10" fill="#3a3a3a" />
</g>
<rect x="97.40" y="207.30" width="28.40" height="8.70" fill="#050505" />
<text x="99.20" y="214.20" font-size="6.4" fill="#f0f0f0" textLength="24.80" lengthAdjust="spacingAndGlyphs" >Reactor2</text>
</g>
<g transform="translate(411.00,0.90)">
<rect x="6.10" y="76.40" width="22.80" height="6.00" fill="#050505" />
<text x="7.62" y="81.22" font-size="5.2" fill="#e4e4e4" textLength="19.76" lengthAdjust="spacingAndGlyphs" >Feed Pump</text>
<rect x="6.10" y="85.70" width="22.80" height="6.40" fill="#fdfdfd" />
<text x="6.84" y="90.88" font-size="5.5" fill="#5a5a5a" textLength="21.32" lengthAdjust="spacingAndGlyphs" >0.00 ml/min</text>
<rect x="6.10" y="95.30" width="22.80" height="6.00" fill="#050505" />
<text x="8.26" y="100.12" font-size="5.2" fill="#e4e4e4" textLength="18.48" lengthAdjust="spacingAndGlyphs" >Acid Pump</text>
<rect x="6.10" y="104.00" width="22.80" height="6.40" fill="#fdfdfd" />
<text x="6.84" y="109.18" font-size="5.5" fill="#5a5a5a" textLength="21.32" lengthAdjust="spacingAndGlyphs" >0.00 ml/min</text>
<rect x="6.10" y="113.50" width="22.80" height="6.00" fill="#050505" />
<text x="7.62" y="118.32" font-size="5.2" fill="#e4e4e4" textLength="19.76" lengthAdjust="spacingAndGlyphs" >Base Pump</text>
<rect x="6.10" y="122.60" width="22.80" height="6.40" fill="#fdfdfd" />
<text x="6.84" y="127.78" font-size="5.5" fill="#5a5a5a" textLength="21.32" lengthAdjust="spacingAndGlyphs" >0.00 ml/min</text>
<g transform="translate(35.40,84.30)"><rect x="-3.8" y="-4.8" width="7.3" height="9.6" rx="1.6" fill="#131713"/><rect x="-2.4" y="-4.5" width="5.4" height="1.2" fill="#6a6e6a"/><path d="M1.2 -2.5 Q-2.3 -2.9 -2.3 0.2 Q-2.3 3.2 1.2 2.8" fill="none" stroke="#23873c" stroke-width="0.85"/><rect x="0.6" y="-1.2" width="3.1" height="2.2" fill="#e0e0e0"/></g>
<g transform="translate(35.40,103.80)"><rect x="-3.8" y="-4.8" width="7.3" height="9.6" rx="1.6" fill="#131713"/><rect x="-2.4" y="-4.5" width="5.4" height="1.2" fill="#6a6e6a"/><path d="M1.2 -2.5 Q-2.3 -2.9 -2.3 0.2 Q-2.3 3.2 1.2 2.8" fill="none" stroke="#23873c" stroke-width="0.85"/><rect x="0.6" y="-1.2" width="3.1" height="2.2" fill="#e0e0e0"/></g>
<g transform="translate(35.40,121.10)"><rect x="-3.8" y="-4.8" width="7.3" height="9.6" rx="1.6" fill="#131713"/><rect x="-2.4" y="-4.5" width="5.4" height="1.2" fill="#6a6e6a"/><path d="M1.2 -2.5 Q-2.3 -2.9 -2.3 0.2 Q-2.3 3.2 1.2 2.8" fill="none" stroke="#23873c" stroke-width="0.85"/><rect x="0.6" y="-1.2" width="3.1" height="2.2" fill="#e0e0e0"/></g>
<line x1="39.00" y1="84.30" x2="52.60" y2="84.30" stroke="#a63636" stroke-width="1.1" />
<line x1="39.00" y1="105.20" x2="52.60" y2="105.20" stroke="#a63636" stroke-width="1.1" />
<line x1="39.00" y1="122.30" x2="52.60" y2="122.30" stroke="#a63636" stroke-width="1.1" />
<line x1="52.60" y1="83.80" x2="52.60" y2="122.80" stroke="#a63636" stroke-width="1.1" />
<rect x="64.10" y="120.00" width="94.90" height="73.80" fill="#0c6a1e" />
<rect x="66.50" y="122.40" width="90.10" height="69.00" fill="#f0b400" />
<rect x="73.30" y="125.40" width="75.00" height="62.30" fill="#c0c0c0" />
<rect x="74.30" y="156.20" width="73.20" height="31.20" fill="#0ee0bd" />
<polyline points="73.30,187.90 73.30,125.30 148.40,125.30 148.40,187.90" fill="none" stroke="#151515" stroke-width="1.0" />
<line x1="73.30" y1="187.90" x2="148.40" y2="187.90" stroke="#6a6a40" stroke-width="0.6" />
<polyline points="52.60,117.60 76.60,117.60 76.60,128.60" fill="none" stroke="#151515" stroke-width="0.9" />
<polyline points="137.60,181.60 137.60,108.30 168.60,108.30" fill="none" stroke="#151515" stroke-width="0.9" />
<line x1="142.60" y1="181.60" x2="142.60" y2="114.60" stroke="#151515" stroke-width="0.9" />
<polyline points="145.90,129.40 145.90,118.10 168.60,118.10" fill="none" stroke="#151515" stroke-width="0.9" />
<polyline points="172.20,81.00 168.60,81.00 168.60,108.30" fill="none" stroke="#a63636" stroke-width="1.1" />
<line x1="168.60" y1="98.00" x2="172.20" y2="98.00" stroke="#a63636" stroke-width="1.1" />
<line x1="142.60" y1="114.60" x2="172.20" y2="114.60" stroke="#a63636" stroke-width="1.1" />
<polyline points="168.60,118.00 168.60,133.00 172.20,133.00" fill="none" stroke="#a63636" stroke-width="1.1" />
<line x1="80.80" y1="117.00" x2="80.80" y2="131.80" stroke="#151515" stroke-width="0.9" />
<line x1="92.50" y1="107.00" x2="92.50" y2="167.60" stroke="#151515" stroke-width="0.9" />
<line x1="128.80" y1="107.00" x2="128.80" y2="167.60" stroke="#151515" stroke-width="0.9" />
<line x1="110.60" y1="117.00" x2="110.60" y2="150.00" stroke="#151515" stroke-width="0.9" />
<rect x="109.75" y="149.40" width="2.10" height="30.60" fill="#0a0a0a" />
<path d="M98.5 174.2 L103.1 179.0 L118.7 179.0 L123.3 174.2 L123.3 185.2 L98.5 185.2Z" fill="#0a0a0a"/>
<circle cx="80.80" cy="112.60" r="4.7" fill="#fafafa" stroke="#1a1a1a" stroke-width="0.95"/>
<text x="79.25" y="114.90" font-size="6.6" fill="#1c1c1c" textLength="3.10" lengthAdjust="spacingAndGlyphs" >P</text>
<circle cx="92.60" cy="102.20" r="4.8" fill="#fafafa" stroke="#1a1a1a" stroke-width="0.95"/>
<text x="89.20" y="104.50" font-size="6.6" fill="#1c1c1c" textLength="6.80" lengthAdjust="spacingAndGlyphs" >DO</text>
<circle cx="110.60" cy="112.60" r="4.7" fill="#fafafa" stroke="#1a1a1a" stroke-width="0.95"/>
<text x="107.20" y="114.90" font-size="6.6" fill="#1c1c1c" textLength="6.80" lengthAdjust="spacingAndGlyphs" >RT</text>
<circle cx="128.80" cy="102.20" r="4.8" fill="#fafafa" stroke="#1a1a1a" stroke-width="0.95"/>
<text x="125.40" y="104.50" font-size="6.6" fill="#1c1c1c" textLength="6.80" lengthAdjust="spacingAndGlyphs" >pH</text>
<rect x="81.00" y="87.80" width="23.80" height="6.00" fill="#fdfdfd" />
<text x="88.89" y="92.78" font-size="5.5" fill="#5a5a5a" textLength="8.03" lengthAdjust="spacingAndGlyphs" >0.00</text>
<rect x="117.40" y="87.80" width="23.60" height="6.00" fill="#fdfdfd" />
<text x="126.33" y="92.78" font-size="5.5" fill="#5a5a5a" textLength="5.73" lengthAdjust="spacingAndGlyphs" >0.0</text>
<rect x="61.50" y="99.00" width="23.40" height="6.60" fill="#fdfdfd" />
<text x="65.63" y="104.28" font-size="5.5" fill="#5a5a5a" textLength="15.13" lengthAdjust="spacingAndGlyphs" >0.00 bar</text>
<rect x="99.80" y="99.00" width="23.20" height="6.60" fill="#fdfdfd" />
<text x="105.65" y="104.28" font-size="5.5" fill="#5a5a5a" textLength="11.51" lengthAdjust="spacingAndGlyphs" >0.0 °C</text>
<g transform="translate(176.40,80.80)" fill="#050505"><path d="M-4.5 -3.9 L-0.7 -1.0 L0.7 -1.0 L4.5 -3.9 L4.5 4.9 L0.7 2.0 L-0.7 2.0 L-4.5 4.9Z"/><rect x="-1.0" y="-5.0" width="2.0" height="6"/><path d="M-1.9 -4.4 Q-1.9 -7.0 0 -7.0 Q1.9 -7.0 1.9 -4.4Z"/></g>
<g transform="translate(176.40,97.80)" fill="#050505"><path d="M-4.5 -3.9 L-0.7 -1.0 L0.7 -1.0 L4.5 -3.9 L4.5 4.9 L0.7 2.0 L-0.7 2.0 L-4.5 4.9Z"/><rect x="-1.0" y="-5.0" width="2.0" height="6"/><path d="M-1.9 -4.4 Q-1.9 -7.0 0 -7.0 Q1.9 -7.0 1.9 -4.4Z"/></g>
<g transform="translate(176.40,114.60)" fill="#050505"><path d="M-4.5 -3.9 L-0.7 -1.0 L0.7 -1.0 L4.5 -3.9 L4.5 4.9 L0.7 2.0 L-0.7 2.0 L-4.5 4.9Z"/><rect x="-1.0" y="-5.0" width="2.0" height="6"/><path d="M-1.9 -4.4 Q-1.9 -7.0 0 -7.0 Q1.9 -7.0 1.9 -4.4Z"/></g>
<g transform="translate(176.40,132.60)" fill="#050505"><path d="M-4.5 -3.9 L-0.7 -1.0 L0.7 -1.0 L4.5 -3.9 L4.5 4.9 L0.7 2.0 L-0.7 2.0 L-4.5 4.9Z"/><rect x="-1.0" y="-5.0" width="2.0" height="6"/><path d="M-1.9 -4.4 Q-1.9 -7.0 0 -7.0 Q1.9 -7.0 1.9 -4.4Z"/></g>
<rect x="183.00" y="76.00" width="23.80" height="6.20" fill="#050505" />
<text x="186.30" y="80.92" font-size="5.2" fill="#e4e4e4" textLength="17.20" lengthAdjust="spacingAndGlyphs" >CO2 MFC</text>
<rect x="183.00" y="83.40" width="23.80" height="6.20" fill="#fdfdfd" />
<text x="184.24" y="88.48" font-size="5.5" fill="#5a5a5a" textLength="21.32" lengthAdjust="spacingAndGlyphs" >0.00 ml/min</text>
<rect x="183.00" y="93.40" width="23.80" height="6.20" fill="#050505" />
<text x="187.79" y="98.32" font-size="5.2" fill="#e4e4e4" textLength="14.23" lengthAdjust="spacingAndGlyphs" >H2 MFC</text>
<rect x="183.00" y="100.70" width="23.80" height="6.20" fill="#fdfdfd" />
<text x="184.24" y="105.78" font-size="5.5" fill="#5a5a5a" textLength="21.32" lengthAdjust="spacingAndGlyphs" >0.00 ml/min</text>
<rect x="183.00" y="110.00" width="23.80" height="6.20" fill="#050505" />
<text x="187.68" y="114.92" font-size="5.2" fill="#e4e4e4" textLength="14.44" lengthAdjust="spacingAndGlyphs" >O2 MFC</text>
<rect x="183.00" y="117.10" width="23.80" height="6.20" fill="#fdfdfd" />
<text x="184.24" y="122.18" font-size="5.5" fill="#5a5a5a" textLength="21.32" lengthAdjust="spacingAndGlyphs" >0.00 ml/min</text>
<rect x="183.00" y="127.50" width="23.80" height="6.20" fill="#050505" />
<text x="187.79" y="132.42" font-size="5.2" fill="#e4e4e4" textLength="14.23" lengthAdjust="spacingAndGlyphs" >N2 MFC</text>
<rect x="38.60" y="157.20" width="23.40" height="6.60" fill="#050505" />
<text x="40.78" y="162.32" font-size="5.2" fill="#e4e4e4" textLength="19.05" lengthAdjust="spacingAndGlyphs" >Zone Temp</text>
<rect x="38.60" y="167.40" width="23.40" height="6.60" fill="#fdfdfd" />
<text x="44.55" y="172.68" font-size="5.5" fill="#5a5a5a" textLength="11.51" lengthAdjust="spacingAndGlyphs" >0.0 °C</text>
<rect x="38.60" y="176.80" width="23.40" height="6.40" fill="#050505" />
<text x="44.56" y="181.82" font-size="5.2" fill="#e4e4e4" textLength="11.47" lengthAdjust="spacingAndGlyphs" >Mantle</text>
<rect x="38.60" y="186.40" width="23.40" height="6.50" fill="#fdfdfd" />
<text x="46.75" y="191.63" font-size="5.5" fill="#5a5a5a" textLength="7.11" lengthAdjust="spacingAndGlyphs" >0 %</text>
<rect x="161.50" y="176.80" width="23.00" height="6.40" fill="#050505" />
<text x="164.18" y="181.82" font-size="5.2" fill="#e4e4e4" textLength="17.63" lengthAdjust="spacingAndGlyphs" >MA Speed</text>
<rect x="161.50" y="186.40" width="23.00" height="6.50" fill="#fdfdfd" />
<text x="167.73" y="191.63" font-size="5.5" fill="#5a5a5a" textLength="10.54" lengthAdjust="spacingAndGlyphs" >0 rpm</text>
<rect x="186.60" y="186.20" width="2.20" height="2.20" fill="#2020e0" />
<g transform="translate(0,0.50)"><rect x="99.6" y="194.2" width="23.4" height="8.2" fill="#8c8c8c"/><rect x="99.6" y="198.6" width="23.4" height="3.8" fill="#9c9c9c"/>
<rect x="100.80" y="195.00" width="21.40" height="2.10" fill="#3a3a3a" />
</g>
<rect x="97.40" y="207.30" width="28.40" height="8.70" fill="#050505" />
<text x="99.20" y="214.20" font-size="6.4" fill="#f0f0f0" textLength="24.80" lengthAdjust="spacingAndGlyphs" >Reactor3</text>
</g>
<g transform="translate(616.30,1.15)">
<rect x="6.10" y="76.40" width="22.80" height="6.00" fill="#050505" />
<text x="7.62" y="81.22" font-size="5.2" fill="#e4e4e4" textLength="19.76" lengthAdjust="spacingAndGlyphs" >Feed Pump</text>
<rect x="6.10" y="85.70" width="22.80" height="6.40" fill="#fdfdfd" />
<text x="6.84" y="90.88" font-size="5.5" fill="#5a5a5a" textLength="21.32" lengthAdjust="spacingAndGlyphs" >0.00 ml/min</text>
<rect x="6.10" y="95.30" width="22.80" height="6.00" fill="#050505" />
<text x="8.26" y="100.12" font-size="5.2" fill="#e4e4e4" textLength="18.48" lengthAdjust="spacingAndGlyphs" >Acid Pump</text>
<rect x="6.10" y="104.00" width="22.80" height="6.40" fill="#fdfdfd" />
<text x="6.84" y="109.18" font-size="5.5" fill="#5a5a5a" textLength="21.32" lengthAdjust="spacingAndGlyphs" >0.00 ml/min</text>
<rect x="6.10" y="113.50" width="22.80" height="6.00" fill="#050505" />
<text x="7.62" y="118.32" font-size="5.2" fill="#e4e4e4" textLength="19.76" lengthAdjust="spacingAndGlyphs" >Base Pump</text>
<rect x="6.10" y="122.60" width="22.80" height="6.40" fill="#fdfdfd" />
<text x="6.84" y="127.78" font-size="5.5" fill="#5a5a5a" textLength="21.32" lengthAdjust="spacingAndGlyphs" >0.00 ml/min</text>
<g transform="translate(35.40,84.30)"><rect x="-3.8" y="-4.8" width="7.3" height="9.6" rx="1.6" fill="#131713"/><rect x="-2.4" y="-4.5" width="5.4" height="1.2" fill="#6a6e6a"/><path d="M1.2 -2.5 Q-2.3 -2.9 -2.3 0.2 Q-2.3 3.2 1.2 2.8" fill="none" stroke="#23873c" stroke-width="0.85"/><rect x="0.6" y="-1.2" width="3.1" height="2.2" fill="#e0e0e0"/></g>
<g transform="translate(35.40,103.80)"><rect x="-3.8" y="-4.8" width="7.3" height="9.6" rx="1.6" fill="#131713"/><rect x="-2.4" y="-4.5" width="5.4" height="1.2" fill="#6a6e6a"/><path d="M1.2 -2.5 Q-2.3 -2.9 -2.3 0.2 Q-2.3 3.2 1.2 2.8" fill="none" stroke="#23873c" stroke-width="0.85"/><rect x="0.6" y="-1.2" width="3.1" height="2.2" fill="#e0e0e0"/></g>
<g transform="translate(35.40,121.10)"><rect x="-3.8" y="-4.8" width="7.3" height="9.6" rx="1.6" fill="#131713"/><rect x="-2.4" y="-4.5" width="5.4" height="1.2" fill="#6a6e6a"/><path d="M1.2 -2.5 Q-2.3 -2.9 -2.3 0.2 Q-2.3 3.2 1.2 2.8" fill="none" stroke="#23873c" stroke-width="0.85"/><rect x="0.6" y="-1.2" width="3.1" height="2.2" fill="#e0e0e0"/></g>
<line x1="39.00" y1="84.30" x2="52.60" y2="84.30" stroke="#a63636" stroke-width="1.1" />
<line x1="39.00" y1="105.20" x2="52.60" y2="105.20" stroke="#a63636" stroke-width="1.1" />
<line x1="39.00" y1="122.30" x2="52.60" y2="122.30" stroke="#a63636" stroke-width="1.1" />
<line x1="52.60" y1="83.80" x2="52.60" y2="122.80" stroke="#a63636" stroke-width="1.1" />
<rect x="64.50" y="120.00" width="93.80" height="73.80" fill="#f4ee00" stroke="#6a6a10" stroke-width="0.5" />
<rect x="66.50" y="122.00" width="89.80" height="69.80" fill="#f0b400" />
<rect x="73.30" y="125.40" width="75.00" height="62.30" fill="#c0c0c0" />
<rect x="74.30" y="156.20" width="73.20" height="31.20" fill="#0ee0bd" />
<polyline points="73.30,187.90 73.30,125.30 148.40,125.30 148.40,187.90" fill="none" stroke="#151515" stroke-width="1.0" />
<line x1="73.30" y1="187.90" x2="148.40" y2="187.90" stroke="#6a6a40" stroke-width="0.6" />
<polyline points="52.60,117.60 76.60,117.60 76.60,128.60" fill="none" stroke="#151515" stroke-width="0.9" />
<polyline points="137.60,181.60 137.60,108.30 168.60,108.30" fill="none" stroke="#151515" stroke-width="0.9" />
<line x1="142.60" y1="181.60" x2="142.60" y2="114.60" stroke="#151515" stroke-width="0.9" />
<polyline points="145.90,129.40 145.90,118.10 168.60,118.10" fill="none" stroke="#151515" stroke-width="0.9" />
<polyline points="172.20,81.00 168.60,81.00 168.60,108.30" fill="none" stroke="#a63636" stroke-width="1.1" />
<line x1="168.60" y1="98.00" x2="172.20" y2="98.00" stroke="#a63636" stroke-width="1.1" />
<line x1="142.60" y1="114.60" x2="172.20" y2="114.60" stroke="#a63636" stroke-width="1.1" />
<polyline points="168.60,118.00 168.60,133.00 172.20,133.00" fill="none" stroke="#a63636" stroke-width="1.1" />
<line x1="80.80" y1="117.00" x2="80.80" y2="131.80" stroke="#151515" stroke-width="0.9" />
<line x1="92.50" y1="107.00" x2="92.50" y2="167.60" stroke="#151515" stroke-width="0.9" />
<line x1="128.80" y1="107.00" x2="128.80" y2="167.60" stroke="#151515" stroke-width="0.9" />
<line x1="110.60" y1="117.00" x2="110.60" y2="150.00" stroke="#151515" stroke-width="0.9" />
<rect x="109.75" y="149.40" width="2.10" height="30.60" fill="#0a0a0a" />
<path d="M98.5 174.2 L103.1 179.0 L118.7 179.0 L123.3 174.2 L123.3 185.2 L98.5 185.2Z" fill="#0a0a0a"/>
<circle cx="80.80" cy="112.60" r="4.7" fill="#fafafa" stroke="#1a1a1a" stroke-width="0.95"/>
<text x="79.25" y="114.90" font-size="6.6" fill="#1c1c1c" textLength="3.10" lengthAdjust="spacingAndGlyphs" >P</text>
<circle cx="92.60" cy="102.20" r="4.8" fill="#fafafa" stroke="#1a1a1a" stroke-width="0.95"/>
<text x="89.20" y="104.50" font-size="6.6" fill="#1c1c1c" textLength="6.80" lengthAdjust="spacingAndGlyphs" >DO</text>
<circle cx="110.60" cy="112.60" r="4.7" fill="#fafafa" stroke="#1a1a1a" stroke-width="0.95"/>
<text x="107.20" y="114.90" font-size="6.6" fill="#1c1c1c" textLength="6.80" lengthAdjust="spacingAndGlyphs" >RT</text>
<circle cx="128.80" cy="102.20" r="4.8" fill="#fafafa" stroke="#1a1a1a" stroke-width="0.95"/>
<text x="125.40" y="104.50" font-size="6.6" fill="#1c1c1c" textLength="6.80" lengthAdjust="spacingAndGlyphs" >pH</text>
<rect x="81.00" y="87.80" width="23.80" height="6.00" fill="#fdfdfd" />
<text x="88.89" y="92.78" font-size="5.5" fill="#5a5a5a" textLength="8.03" lengthAdjust="spacingAndGlyphs" >0.00</text>
<rect x="117.40" y="87.80" width="23.60" height="6.00" fill="#fdfdfd" />
<text x="126.33" y="92.78" font-size="5.5" fill="#5a5a5a" textLength="5.73" lengthAdjust="spacingAndGlyphs" >0.0</text>
<rect x="61.50" y="99.00" width="23.40" height="6.60" fill="#fdfdfd" />
<text x="65.63" y="104.28" font-size="5.5" fill="#5a5a5a" textLength="15.13" lengthAdjust="spacingAndGlyphs" >0.00 bar</text>
<rect x="99.80" y="99.00" width="23.20" height="6.60" fill="#fdfdfd" />
<text x="105.65" y="104.28" font-size="5.5" fill="#5a5a5a" textLength="11.51" lengthAdjust="spacingAndGlyphs" >0.0 °C</text>
<g transform="translate(176.40,80.80)" fill="#050505"><path d="M-4.5 -3.9 L-0.7 -1.0 L0.7 -1.0 L4.5 -3.9 L4.5 4.9 L0.7 2.0 L-0.7 2.0 L-4.5 4.9Z"/><rect x="-1.0" y="-5.0" width="2.0" height="6"/><path d="M-1.9 -4.4 Q-1.9 -7.0 0 -7.0 Q1.9 -7.0 1.9 -4.4Z"/></g>
<g transform="translate(176.40,97.80)" fill="#050505"><path d="M-4.5 -3.9 L-0.7 -1.0 L0.7 -1.0 L4.5 -3.9 L4.5 4.9 L0.7 2.0 L-0.7 2.0 L-4.5 4.9Z"/><rect x="-1.0" y="-5.0" width="2.0" height="6"/><path d="M-1.9 -4.4 Q-1.9 -7.0 0 -7.0 Q1.9 -7.0 1.9 -4.4Z"/></g>
<g transform="translate(176.40,114.60)" fill="#050505"><path d="M-4.5 -3.9 L-0.7 -1.0 L0.7 -1.0 L4.5 -3.9 L4.5 4.9 L0.7 2.0 L-0.7 2.0 L-4.5 4.9Z"/><rect x="-1.0" y="-5.0" width="2.0" height="6"/><path d="M-1.9 -4.4 Q-1.9 -7.0 0 -7.0 Q1.9 -7.0 1.9 -4.4Z"/></g>
<g transform="translate(176.40,132.60)" fill="#050505"><path d="M-4.5 -3.9 L-0.7 -1.0 L0.7 -1.0 L4.5 -3.9 L4.5 4.9 L0.7 2.0 L-0.7 2.0 L-4.5 4.9Z"/><rect x="-1.0" y="-5.0" width="2.0" height="6"/><path d="M-1.9 -4.4 Q-1.9 -7.0 0 -7.0 Q1.9 -7.0 1.9 -4.4Z"/></g>
<rect x="183.00" y="76.00" width="23.80" height="6.20" fill="#050505" />
<text x="186.30" y="80.92" font-size="5.2" fill="#e4e4e4" textLength="17.20" lengthAdjust="spacingAndGlyphs" >CO2 MFC</text>
<rect x="183.00" y="83.40" width="23.80" height="6.20" fill="#fdfdfd" />
<text x="184.24" y="88.48" font-size="5.5" fill="#5a5a5a" textLength="21.32" lengthAdjust="spacingAndGlyphs" >0.00 ml/min</text>
<rect x="183.00" y="93.40" width="23.80" height="6.20" fill="#050505" />
<text x="187.79" y="98.32" font-size="5.2" fill="#e4e4e4" textLength="14.23" lengthAdjust="spacingAndGlyphs" >H2 MFC</text>
<rect x="183.00" y="100.70" width="23.80" height="6.20" fill="#fdfdfd" />
<text x="184.24" y="105.78" font-size="5.5" fill="#5a5a5a" textLength="21.32" lengthAdjust="spacingAndGlyphs" >0.00 ml/min</text>
<rect x="183.00" y="110.00" width="23.80" height="6.20" fill="#050505" />
<text x="187.68" y="114.92" font-size="5.2" fill="#e4e4e4" textLength="14.44" lengthAdjust="spacingAndGlyphs" >O2 MFC</text>
<rect x="183.00" y="117.10" width="23.80" height="6.20" fill="#fdfdfd" />
<text x="184.24" y="122.18" font-size="5.5" fill="#5a5a5a" textLength="21.32" lengthAdjust="spacingAndGlyphs" >0.00 ml/min</text>
<rect x="183.00" y="127.50" width="23.80" height="6.20" fill="#050505" />
<text x="187.79" y="132.42" font-size="5.2" fill="#e4e4e4" textLength="14.23" lengthAdjust="spacingAndGlyphs" >N2 MFC</text>
<rect x="183.00" y="134.80" width="23.80" height="6.20" fill="#fdfdfd" />
<text x="184.24" y="139.88" font-size="5.5" fill="#5a5a5a" textLength="21.32" lengthAdjust="spacingAndGlyphs" >0.00 ml/min</text>
<rect x="38.60" y="157.20" width="23.40" height="6.60" fill="#050505" />
<text x="40.78" y="162.32" font-size="5.2" fill="#e4e4e4" textLength="19.05" lengthAdjust="spacingAndGlyphs" >Zone Temp</text>
<rect x="38.60" y="167.40" width="23.40" height="6.60" fill="#fdfdfd" />
<text x="44.55" y="172.68" font-size="5.5" fill="#5a5a5a" textLength="11.51" lengthAdjust="spacingAndGlyphs" >0.0 °C</text>
<rect x="38.60" y="176.80" width="23.40" height="6.40" fill="#050505" />
<text x="44.56" y="181.82" font-size="5.2" fill="#e4e4e4" textLength="11.47" lengthAdjust="spacingAndGlyphs" >Mantle</text>
<rect x="38.60" y="186.40" width="23.40" height="6.50" fill="#fdfdfd" />
<text x="46.75" y="191.63" font-size="5.5" fill="#5a5a5a" textLength="7.11" lengthAdjust="spacingAndGlyphs" >0 %</text>
<rect x="161.50" y="176.80" width="23.00" height="6.40" fill="#050505" />
<text x="164.18" y="181.82" font-size="5.2" fill="#e4e4e4" textLength="17.63" lengthAdjust="spacingAndGlyphs" >MA Speed</text>
<rect x="161.50" y="186.40" width="23.00" height="6.50" fill="#fdfdfd" />
<text x="167.73" y="191.63" font-size="5.5" fill="#5a5a5a" textLength="10.54" lengthAdjust="spacingAndGlyphs" >0 rpm</text>
<rect x="186.60" y="186.20" width="2.20" height="2.20" fill="#2020e0" />
<g transform="translate(0,0.50)"><rect x="99.6" y="194.2" width="23.4" height="8.2" fill="#8c8c8c"/><rect x="99.6" y="198.6" width="23.4" height="3.8" fill="#9c9c9c"/>
<rect x="100.80" y="195.00" width="21.40" height="2.10" fill="#3a3a3a" />
</g>
<rect x="97.40" y="207.30" width="28.40" height="8.70" fill="#050505" />
<text x="99.20" y="214.20" font-size="6.4" fill="#f0f0f0" textLength="24.80" lengthAdjust="spacingAndGlyphs" >Reactor4</text>
</g>
<defs><linearGradient id="capg" x1="0" y1="0" x2="1" y2="0"><stop offset="0" stop-color="#0c2a74"/><stop offset="0.45" stop-color="#3f66ae"/><stop offset="1" stop-color="#a6caf0"/></linearGradient></defs>
<rect x="66.60" y="262.60" width="558.80" height="303.20" fill="#d4d0c8" />
<rect x="66.60" y="262.60" width="558.80" height="7.80" fill="url(#capg)" />
<g transform="translate(68.2,263.6)"><rect x="0" y="1" width="2.4" height="4" fill="#d03020"/><rect x="2" y="0" width="3" height="3" fill="#e0c020"/><rect x="2.4" y="3" width="2.6" height="2.6" fill="#30b040"/><rect x="3.4" y="1.4" width="1.6" height="1.8" fill="#30a0e0"/></g>
<text x="77.00" y="269.00" font-size="5.3" fill="#ffffff" font-weight="bold" textLength="185.00" lengthAdjust="spacingAndGlyphs" >HEL WinISO ver: 2.3.42.1 (simulation) E486 - [Main : Logging]</text>
<rect x="597.40" y="264.00" width="7.60" height="5.40" fill="#d4d0c8" />
<polyline points="597.40,269.40 597.40,264.00 605.00,264.00" fill="none" stroke="#ffffff" stroke-width="0.6" />
<polyline points="597.40,269.40 605.00,269.40 605.00,264.00" fill="none" stroke="#404040" stroke-width="0.6" />
<rect x="606.40" y="264.00" width="7.60" height="5.40" fill="#d4d0c8" />
<polyline points="606.40,269.40 606.40,264.00 614.00,264.00" fill="none" stroke="#ffffff" stroke-width="0.6" />
<polyline points="606.40,269.40 614.00,269.40 614.00,264.00" fill="none" stroke="#404040" stroke-width="0.6" />
<rect x="616.40" y="264.00" width="7.60" height="5.40" fill="#d4d0c8" />
<polyline points="616.40,269.40 616.40,264.00 624.00,264.00" fill="none" stroke="#ffffff" stroke-width="0.6" />
<polyline points="616.40,269.40 624.00,269.40 624.00,264.00" fill="none" stroke="#404040" stroke-width="0.6" />
<line x1="599.20" y1="268.20" x2="602.40" y2="268.20" stroke="#000" stroke-width="0.9" />
<rect x="608.60" y="265.80" width="3.00" height="2.60" fill="none" stroke="#000" stroke-width="0.6" />
<rect x="609.60" y="264.90" width="3.00" height="2.60" fill="none" stroke="#000" stroke-width="0.6" />
<line x1="618.40" y1="265.20" x2="622.00" y2="268.40" stroke="#000" stroke-width="0.8" />
<line x1="622.00" y1="265.20" x2="618.40" y2="268.40" stroke="#000" stroke-width="0.8" />
<text x="69.40" y="277.00" font-size="5.6" fill="#8a8a86" textLength="8.20" lengthAdjust="spacingAndGlyphs" >File</text>
<line x1="69.40" y1="277.80" x2="71.80" y2="277.80" stroke="#8a8a86" stroke-width="0.4" />
<text x="85.20" y="277.00" font-size="5.6" fill="#8a8a86" textLength="14.40" lengthAdjust="spacingAndGlyphs" >Setup</text>
<line x1="85.20" y1="277.80" x2="87.60" y2="277.80" stroke="#8a8a86" stroke-width="0.4" />
<text x="107.20" y="277.00" font-size="5.6" fill="#8a8a86" textLength="20.00" lengthAdjust="spacingAndGlyphs" >Window</text>
<line x1="107.20" y1="277.80" x2="109.60" y2="277.80" stroke="#8a8a86" stroke-width="0.4" />
<text x="134.20" y="277.00" font-size="5.6" fill="#8a8a86" textLength="10.40" lengthAdjust="spacingAndGlyphs" >Help</text>
<line x1="134.20" y1="277.80" x2="136.60" y2="277.80" stroke="#8a8a86" stroke-width="0.4" />
<line x1="66.60" y1="278.60" x2="625.40" y2="278.60" stroke="#b0aca4" stroke-width="0.6" />
<line x1="66.60" y1="279.20" x2="625.40" y2="279.20" stroke="#ffffff" stroke-width="0.6" />
<rect x="72.60" y="280.40" width="10.00" height="8.60" fill="#d4d0c8" />
<polyline points="72.60,289.00 72.60,280.40 82.60,280.40" fill="none" stroke="#ffffff" stroke-width="0.6" />
<polyline points="72.60,289.00 82.60,289.00 82.60,280.40" fill="none" stroke="#707070" stroke-width="0.6" />
<rect x="74" y="281.6" width="4.8" height="6.4" fill="#7a1414"/><rect x="78.6" y="281.4" width="2.8" height="6.8" fill="#f0f0f0" stroke="#222" stroke-width="0.5"/>
<rect x="90.00" y="280.40" width="10.00" height="8.60" fill="#d4d0c8" />
<polyline points="90.00,289.00 90.00,280.40 100.00,280.40" fill="none" stroke="#ffffff" stroke-width="0.6" />
<polyline points="90.00,289.00 100.00,289.00 100.00,280.40" fill="none" stroke="#707070" stroke-width="0.6" />
<rect x="91.4" y="281.6" width="7" height="6.2" fill="#e8e020"/><path d="M93.4 282.4 L93.4 285.6 Q95 287.6 96.6 285.6 L96.6 282.4" fill="none" stroke="#101060" stroke-width="1.4"/>
<rect x="101.40" y="280.40" width="10.40" height="8.60" fill="#e6e3de" />
<polyline points="101.40,289.00 101.40,280.40 111.80,280.40" fill="none" stroke="#606060" stroke-width="0.6" />
<polyline points="101.40,289.00 111.80,289.00 111.80,280.40" fill="none" stroke="#ffffff" stroke-width="0.6" />
<rect x="103" y="281.8" width="7" height="5.8" fill="#fff" stroke="#303070" stroke-width="0.6"/><path d="M104 286.6 L106 283.4 L107.6 285.2 L109.4 282.6" fill="none" stroke="#c03060" stroke-width="0.7"/>
<rect x="114.80" y="280.40" width="9.60" height="8.60" fill="#d4d0c8" />
<polyline points="114.80,289.00 114.80,280.40 124.40,280.40" fill="none" stroke="#ffffff" stroke-width="0.6" />
<polyline points="114.80,289.00 124.40,289.00 124.40,280.40" fill="none" stroke="#707070" stroke-width="0.6" />
<rect x="116.4" y="281.8" width="6.4" height="6" fill="#ececec" stroke="#505050" stroke-width="0.6"/><rect x="117.8" y="283" width="3" height="3.6" fill="#fff" stroke="#808080" stroke-width="0.4"/>
<rect x="130.80" y="280.40" width="10.60" height="8.60" fill="#e6e3de" />
<polyline points="130.80,289.00 130.80,280.40 141.40,280.40" fill="none" stroke="#606060" stroke-width="0.6" />
<polyline points="130.80,289.00 141.40,289.00 141.40,280.40" fill="none" stroke="#ffffff" stroke-width="0.6" />
<rect x="132.6" y="281.6" width="7" height="6.2" fill="#fff" stroke="#203080" stroke-width="0.7"/><path d="M133.2 287 L135.4 283.4 L137 285 L139 282.4" fill="none" stroke="#1030c0" stroke-width="0.9"/><rect x="136.6" y="285.4" width="2.8" height="2.2" fill="#c02020"/>
<rect x="148.20" y="280.40" width="10.60" height="8.60" fill="#d4d0c8" />
<polyline points="148.20,289.00 148.20,280.40 158.80,280.40" fill="none" stroke="#ffffff" stroke-width="0.6" />
<polyline points="148.20,289.00 158.80,289.00 158.80,280.40" fill="none" stroke="#707070" stroke-width="0.6" />
<rect x="149.8" y="282.8" width="7.4" height="5.2" rx="1" fill="#b01818"/><rect x="152" y="284" width="3" height="2.8" fill="#f4f4f4"/><rect x="150.6" y="281.4" width="5.8" height="1.4" fill="#401010"/>
<rect x="168.60" y="280.40" width="18.00" height="8.60" fill="#d4d0c8" />
<polyline points="168.60,289.00 168.60,280.40 186.60,280.40" fill="none" stroke="#ffffff" stroke-width="0.6" />
<polyline points="168.60,289.00 186.60,289.00 186.60,280.40" fill="none" stroke="#707070" stroke-width="0.6" />
<text x="173.90" y="288.00" font-size="8.8" fill="#b01010" text-anchor="middle" font-weight="bold" >+</text>
<line x1="180.60" y1="281.00" x2="180.60" y2="288.60" stroke="#808080" stroke-width="0.5" />
<path d="M182.6 284.2 L185.4 284.2 L184 285.8Z" fill="#202020"/>
<rect x="187.40" y="280.40" width="11.60" height="8.60" fill="#d4d0c8" />
<polyline points="187.40,289.00 187.40,280.40 199.00,280.40" fill="none" stroke="#ffffff" stroke-width="0.6" />
<polyline points="187.40,289.00 199.00,289.00 199.00,280.40" fill="none" stroke="#707070" stroke-width="0.6" />
<line x1="190.40" y1="284.80" x2="196.60" y2="284.80" stroke="#b01010" stroke-width="1.2" />
<rect x="200.40" y="280.40" width="11.60" height="8.60" fill="#d4d0c8" />
<polyline points="200.40,289.00 200.40,280.40 212.00,280.40" fill="none" stroke="#ffffff" stroke-width="0.6" />
<polyline points="200.40,289.00 212.00,289.00 212.00,280.40" fill="none" stroke="#707070" stroke-width="0.6" />
<path d="M203 282 L203 287.6 M203.6 283.2 L206 283.2" stroke="#202020" stroke-width="0.7" fill="none"/><path d="M205.2 285 L209.4 286.2 L205.2 287.4Z" fill="#1020a0"/><rect x="207.6" y="284.2" width="2.6" height="1.6" fill="#a01010"/>
<text x="67.40" y="564.20" font-size="5.2" fill="#303030" textLength="23.60" lengthAdjust="spacingAndGlyphs" >Logging...</text>
<polyline points="94.40,565.20 94.40,559.40 256.40,559.40" fill="none" stroke="#8c8a84" stroke-width="0.6" />
<polyline points="94.40,565.20 256.40,565.20 256.40,559.40" fill="none" stroke="#ffffff" stroke-width="0.6" />
<polyline points="259.40,565.20 259.40,559.40 284.00,559.40" fill="none" stroke="#8c8a84" stroke-width="0.6" />
<polyline points="259.40,565.20 284.00,565.20 284.00,559.40" fill="none" stroke="#ffffff" stroke-width="0.6" />
<polyline points="286.40,565.20 286.40,559.40 624.60,559.40" fill="none" stroke="#8c8a84" stroke-width="0.6" />
<polyline points="286.40,565.20 624.60,565.20 624.60,559.40" fill="none" stroke="#ffffff" stroke-width="0.6" />
<rect x="67.00" y="290.80" width="558.00" height="267.20" fill="#ffffff" />
<rect x="67.20" y="291.00" width="276.60" height="130.30" fill="#ffffff" />
<g transform="translate(0.00,0.00)">
<g transform="translate(70,292.9)" fill="none"><path d="M1.2 6.2 L4 1 L8.4 0.8 L8.4 6.2Z" fill="#dfe6f4"/><path d="M0.7 0 L0.7 6.7 L9.4 6.7" stroke="#2a2a4a" stroke-width="0.8"/><path d="M1 6.2 Q3.4 1.4 8 0.8" stroke="#3a46c8" stroke-width="0.9"/><path d="M1 6.4 L5 2.6 L8.8 3.2" stroke="#c83c3c" stroke-width="0.8"/></g>
<text x="165.60" y="299.30" font-size="8.3" fill="#0e8080" font-weight="bold" textLength="79.60" lengthAdjust="spacingAndGlyphs" >Reactor 1 Temp</text>
<line x1="82.60" y1="303.80" x2="90.40" y2="303.80" stroke="#cc3a3a" stroke-width="1.1" />
<text x="92.20" y="305.80" font-size="5.8" fill="#3c3c3c" textLength="12.00" lengthAdjust="spacingAndGlyphs" >R1T</text>
<line x1="107.60" y1="303.80" x2="115.60" y2="303.80" stroke="#3c3ce0" stroke-width="1.1" />
<text x="117.20" y="305.80" font-size="5.8" fill="#3c3c3c" textLength="11.60" lengthAdjust="spacingAndGlyphs" >Z1T</text>
<line x1="132.80" y1="303.80" x2="140.80" y2="303.80" stroke="#f040e8" stroke-width="1.1" />
<text x="142.80" y="305.80" font-size="5.8" fill="#3c3c3c" textLength="12.00" lengthAdjust="spacingAndGlyphs" >H1P</text>
<line x1="283.60" y1="303.80" x2="291.00" y2="303.80" stroke="#2f8f8f" stroke-width="1.1" />
<text x="292.80" y="305.80" font-size="5.8" fill="#3c3c3c" textLength="12.70" lengthAdjust="spacingAndGlyphs" >S1S</text>
<line x1="308.00" y1="303.80" x2="315.80" y2="303.80" stroke="#f040e8" stroke-width="1.1" />
<text x="318.10" y="305.80" font-size="5.8" fill="#3c3c3c" textLength="12.90" lengthAdjust="spacingAndGlyphs" >R1P</text>
<line x1="85.60" y1="414.20" x2="319.40" y2="414.20" stroke="#d8d8d8" stroke-width="0.7" />
<text x="72.37" y="416.40" font-size="6.1" fill="#2a2a2a" textLength="11.63" lengthAdjust="spacingAndGlyphs" >0.00</text>
<text x="322.00" y="416.40" font-size="6.1" fill="#2a2a2a" textLength="11.63" lengthAdjust="spacingAndGlyphs" >0.00</text>
<line x1="85.60" y1="403.84" x2="319.40" y2="403.84" stroke="#d8d8d8" stroke-width="0.7" />
<text x="72.37" y="406.04" font-size="6.1" fill="#2a2a2a" textLength="11.63" lengthAdjust="spacingAndGlyphs" >5.00</text>
<text x="322.00" y="406.04" font-size="6.1" fill="#2a2a2a" textLength="18.28" lengthAdjust="spacingAndGlyphs" >100.00</text>
<line x1="85.60" y1="393.48" x2="319.40" y2="393.48" stroke="#d8d8d8" stroke-width="0.7" />
<text x="69.04" y="395.68" font-size="6.1" fill="#2a2a2a" textLength="14.96" lengthAdjust="spacingAndGlyphs" >10.00</text>
<text x="322.00" y="395.68" font-size="6.1" fill="#2a2a2a" textLength="18.28" lengthAdjust="spacingAndGlyphs" >200.00</text>
<line x1="85.60" y1="383.12" x2="319.40" y2="383.12" stroke="#d8d8d8" stroke-width="0.7" />
<text x="69.04" y="385.32" font-size="6.1" fill="#2a2a2a" textLength="14.96" lengthAdjust="spacingAndGlyphs" >15.00</text>
<text x="322.00" y="385.32" font-size="6.1" fill="#2a2a2a" textLength="18.28" lengthAdjust="spacingAndGlyphs" >300.00</text>
<line x1="85.60" y1="372.76" x2="319.40" y2="372.76" stroke="#d8d8d8" stroke-width="0.7" />
<text x="69.04" y="374.96" font-size="6.1" fill="#2a2a2a" textLength="14.96" lengthAdjust="spacingAndGlyphs" >20.00</text>
<text x="322.00" y="374.96" font-size="6.1" fill="#2a2a2a" textLength="18.28" lengthAdjust="spacingAndGlyphs" >400.00</text>
<line x1="85.60" y1="362.40" x2="319.40" y2="362.40" stroke="#d8d8d8" stroke-width="0.7" />
<text x="69.04" y="364.60" font-size="6.1" fill="#2a2a2a" textLength="14.96" lengthAdjust="spacingAndGlyphs" >25.00</text>
<text x="322.00" y="364.60" font-size="6.1" fill="#2a2a2a" textLength="18.28" lengthAdjust="spacingAndGlyphs" >500.00</text>
<line x1="85.60" y1="352.04" x2="319.40" y2="352.04" stroke="#d8d8d8" stroke-width="0.7" />
<text x="69.04" y="354.24" font-size="6.1" fill="#2a2a2a" textLength="14.96" lengthAdjust="spacingAndGlyphs" >30.00</text>
<text x="322.00" y="354.24" font-size="6.1" fill="#2a2a2a" textLength="18.28" lengthAdjust="spacingAndGlyphs" >600.00</text>
<line x1="85.60" y1="341.68" x2="319.40" y2="341.68" stroke="#d8d8d8" stroke-width="0.7" />
<text x="69.04" y="343.88" font-size="6.1" fill="#2a2a2a" textLength="14.96" lengthAdjust="spacingAndGlyphs" >35.00</text>
<text x="322.00" y="343.88" font-size="6.1" fill="#2a2a2a" textLength="18.28" lengthAdjust="spacingAndGlyphs" >700.00</text>
<line x1="85.60" y1="331.32" x2="319.40" y2="331.32" stroke="#d8d8d8" stroke-width="0.7" />
<text x="69.04" y="333.52" font-size="6.1" fill="#2a2a2a" textLength="14.96" lengthAdjust="spacingAndGlyphs" >40.00</text>
<text x="322.00" y="333.52" font-size="6.1" fill="#2a2a2a" textLength="18.28" lengthAdjust="spacingAndGlyphs" >800.00</text>
<line x1="85.60" y1="320.96" x2="319.40" y2="320.96" stroke="#d8d8d8" stroke-width="0.7" />
<text x="69.04" y="323.16" font-size="6.1" fill="#2a2a2a" textLength="14.96" lengthAdjust="spacingAndGlyphs" >45.00</text>
<text x="322.00" y="323.16" font-size="6.1" fill="#2a2a2a" textLength="18.28" lengthAdjust="spacingAndGlyphs" >900.00</text>
<line x1="85.60" y1="310.60" x2="319.40" y2="310.60" stroke="#d8d8d8" stroke-width="0.7" />
<text x="69.04" y="312.80" font-size="6.1" fill="#2a2a2a" textLength="14.96" lengthAdjust="spacingAndGlyphs" >50.00</text>
<text x="322.00" y="312.80" font-size="6.1" fill="#2a2a2a" textLength="21.61" lengthAdjust="spacingAndGlyphs" >1000.00</text>
<line x1="85.60" y1="310.60" x2="85.60" y2="414.20" stroke="#d8d8d8" stroke-width="0.7" />
<text x="80.08" y="421.10" font-size="6.1" fill="#2a2a2a" textLength="11.63" lengthAdjust="spacingAndGlyphs" >0.00</text>
<line x1="108.98" y1="310.60" x2="108.98" y2="414.20" stroke="#d8d8d8" stroke-width="0.7" />
<text x="103.46" y="421.10" font-size="6.1" fill="#2a2a2a" textLength="11.63" lengthAdjust="spacingAndGlyphs" >2.00</text>
<line x1="132.36" y1="310.60" x2="132.36" y2="414.20" stroke="#d8d8d8" stroke-width="0.7" />
<text x="126.84" y="421.10" font-size="6.1" fill="#2a2a2a" textLength="11.63" lengthAdjust="spacingAndGlyphs" >4.00</text>
<line x1="155.74" y1="310.60" x2="155.74" y2="414.20" stroke="#d8d8d8" stroke-width="0.7" />
<text x="150.22" y="421.10" font-size="6.1" fill="#2a2a2a" textLength="11.63" lengthAdjust="spacingAndGlyphs" >6.00</text>
<line x1="179.12" y1="310.60" x2="179.12" y2="414.20" stroke="#d8d8d8" stroke-width="0.7" />
<text x="173.60" y="421.10" font-size="6.1" fill="#2a2a2a" textLength="11.63" lengthAdjust="spacingAndGlyphs" >8.00</text>
<line x1="202.50" y1="310.60" x2="202.50" y2="414.20" stroke="#d8d8d8" stroke-width="0.7" />
<text x="195.32" y="421.10" font-size="6.1" fill="#2a2a2a" textLength="14.96" lengthAdjust="spacingAndGlyphs" >10.00</text>
<line x1="225.88" y1="310.60" x2="225.88" y2="414.20" stroke="#d8d8d8" stroke-width="0.7" />
<text x="218.70" y="421.10" font-size="6.1" fill="#2a2a2a" textLength="14.96" lengthAdjust="spacingAndGlyphs" >12.00</text>
<line x1="249.26" y1="310.60" x2="249.26" y2="414.20" stroke="#d8d8d8" stroke-width="0.7" />
<text x="242.08" y="421.10" font-size="6.1" fill="#2a2a2a" textLength="14.96" lengthAdjust="spacingAndGlyphs" >14.00</text>
<line x1="272.64" y1="310.60" x2="272.64" y2="414.20" stroke="#d8d8d8" stroke-width="0.7" />
<text x="265.46" y="421.10" font-size="6.1" fill="#2a2a2a" textLength="14.96" lengthAdjust="spacingAndGlyphs" >16.00</text>
<line x1="296.02" y1="310.60" x2="296.02" y2="414.20" stroke="#d8d8d8" stroke-width="0.7" />
<text x="288.84" y="421.10" font-size="6.1" fill="#2a2a2a" textLength="14.96" lengthAdjust="spacingAndGlyphs" >18.00</text>
<line x1="319.40" y1="310.60" x2="319.40" y2="414.20" stroke="#d8d8d8" stroke-width="0.7" />
<text x="312.22" y="421.10" font-size="6.1" fill="#2a2a2a" textLength="14.96" lengthAdjust="spacingAndGlyphs" >20.00</text>
<polyline points="85.60,310.60 85.60,414.20 319.40,414.20 319.40,310.60" fill="none" stroke="#9a9a9a" stroke-width="0.7" />
<polyline points="86.20,413.90 149.60,413.90" fill="none" stroke="#f040e8" stroke-width="1.2" />
<polyline points="92.70,414.20 149.60,384.50" fill="none" stroke="#cc3a3a" stroke-width="1.5" />
<polyline points="89.40,414.20 91.40,406.00 93.90,401.80 96.80,403.20 101.00,404.90 108.00,405.60 115.60,405.90 126.00,405.70 132.30,405.40 138.60,404.30 149.60,404.00" fill="none" stroke="#f040e8" stroke-width="1.4" stroke-linejoin="round"/>
<polyline points="89.30,414.20 91.60,394.00 93.30,359.50 95.40,335.00 96.80,329.40 101.50,322.00 104.50,321.20 109.60,320.70 149.60,320.70" fill="none" stroke="#2f8f8f" stroke-width="1.5" stroke-linejoin="round"/>
</g>
<rect x="345.40" y="291.00" width="279.40" height="130.30" fill="#ffffff" />
<g transform="translate(280.40,0.00)">
<g transform="translate(70,292.9)" fill="none"><path d="M1.2 6.2 L4 1 L8.4 0.8 L8.4 6.2Z" fill="#dfe6f4"/><path d="M0.7 0 L0.7 6.7 L9.4 6.7" stroke="#2a2a4a" stroke-width="0.8"/><path d="M1 6.2 Q3.4 1.4 8 0.8" stroke="#3a46c8" stroke-width="0.9"/><path d="M1 6.4 L5 2.6 L8.8 3.2" stroke="#c83c3c" stroke-width="0.8"/></g>
<text x="165.60" y="299.30" font-size="8.3" fill="#0e8080" font-weight="bold" textLength="79.60" lengthAdjust="spacingAndGlyphs" >Reactor 2 Temp</text>
<line x1="82.60" y1="303.80" x2="90.40" y2="303.80" stroke="#cc3a3a" stroke-width="1.1" />
<text x="92.20" y="305.80" font-size="5.8" fill="#3c3c3c" textLength="12.00" lengthAdjust="spacingAndGlyphs" >R2T</text>
<line x1="107.60" y1="303.80" x2="115.60" y2="303.80" stroke="#3c3ce0" stroke-width="1.1" />
<text x="117.20" y="305.80" font-size="5.8" fill="#3c3c3c" textLength="11.60" lengthAdjust="spacingAndGlyphs" >Z2T</text>
<line x1="132.80" y1="303.80" x2="140.80" y2="303.80" stroke="#f040e8" stroke-width="1.1" />
<text x="142.80" y="305.80" font-size="5.8" fill="#3c3c3c" textLength="12.00" lengthAdjust="spacingAndGlyphs" >H2P</text>
<line x1="283.60" y1="303.80" x2="291.00" y2="303.80" stroke="#2f8f8f" stroke-width="1.1" />
<text x="292.80" y="305.80" font-size="5.8" fill="#3c3c3c" textLength="12.70" lengthAdjust="spacingAndGlyphs" >S2S</text>
<line x1="308.00" y1="303.80" x2="315.80" y2="303.80" stroke="#f040e8" stroke-width="1.1" />
<text x="318.10" y="305.80" font-size="5.8" fill="#3c3c3c" textLength="12.90" lengthAdjust="spacingAndGlyphs" >R2P</text>
<line x1="85.60" y1="414.20" x2="319.40" y2="414.20" stroke="#d8d8d8" stroke-width="0.7" />
<text x="72.37" y="416.40" font-size="6.1" fill="#2a2a2a" textLength="11.63" lengthAdjust="spacingAndGlyphs" >0.00</text>
<text x="322.00" y="416.40" font-size="6.1" fill="#2a2a2a" textLength="11.63" lengthAdjust="spacingAndGlyphs" >0.00</text>
<line x1="85.60" y1="403.84" x2="319.40" y2="403.84" stroke="#d8d8d8" stroke-width="0.7" />
<text x="72.37" y="406.04" font-size="6.1" fill="#2a2a2a" textLength="11.63" lengthAdjust="spacingAndGlyphs" >5.00</text>
<text x="322.00" y="406.04" font-size="6.1" fill="#2a2a2a" textLength="18.28" lengthAdjust="spacingAndGlyphs" >100.00</text>
<line x1="85.60" y1="393.48" x2="319.40" y2="393.48" stroke="#d8d8d8" stroke-width="0.7" />
<text x="69.04" y="395.68" font-size="6.1" fill="#2a2a2a" textLength="14.96" lengthAdjust="spacingAndGlyphs" >10.00</text>
<text x="322.00" y="395.68" font-size="6.1" fill="#2a2a2a" textLength="18.28" lengthAdjust="spacingAndGlyphs" >200.00</text>
<line x1="85.60" y1="383.12" x2="319.40" y2="383.12" stroke="#d8d8d8" stroke-width="0.7" />
<text x="69.04" y="385.32" font-size="6.1" fill="#2a2a2a" textLength="14.96" lengthAdjust="spacingAndGlyphs" >15.00</text>
<text x="322.00" y="385.32" font-size="6.1" fill="#2a2a2a" textLength="18.28" lengthAdjust="spacingAndGlyphs" >300.00</text>
<line x1="85.60" y1="372.76" x2="319.40" y2="372.76" stroke="#d8d8d8" stroke-width="0.7" />
<text x="69.04" y="374.96" font-size="6.1" fill="#2a2a2a" textLength="14.96" lengthAdjust="spacingAndGlyphs" >20.00</text>
<text x="322.00" y="374.96" font-size="6.1" fill="#2a2a2a" textLength="18.28" lengthAdjust="spacingAndGlyphs" >400.00</text>
<line x1="85.60" y1="362.40" x2="319.40" y2="362.40" stroke="#d8d8d8" stroke-width="0.7" />
<text x="69.04" y="364.60" font-size="6.1" fill="#2a2a2a" textLength="14.96" lengthAdjust="spacingAndGlyphs" >25.00</text>
<text x="322.00" y="364.60" font-size="6.1" fill="#2a2a2a" textLength="18.28" lengthAdjust="spacingAndGlyphs" >500.00</text>
<line x1="85.60" y1="352.04" x2="319.40" y2="352.04" stroke="#d8d8d8" stroke-width="0.7" />
<text x="69.04" y="354.24" font-size="6.1" fill="#2a2a2a" textLength="14.96" lengthAdjust="spacingAndGlyphs" >30.00</text>
<text x="322.00" y="354.24" font-size="6.1" fill="#2a2a2a" textLength="18.28" lengthAdjust="spacingAndGlyphs" >600.00</text>
<line x1="85.60" y1="341.68" x2="319.40" y2="341.68" stroke="#d8d8d8" stroke-width="0.7" />
<text x="69.04" y="343.88" font-size="6.1" fill="#2a2a2a" textLength="14.96" lengthAdjust="spacingAndGlyphs" >35.00</text>
<text x="322.00" y="343.88" font-size="6.1" fill="#2a2a2a" textLength="18.28" lengthAdjust="spacingAndGlyphs" >700.00</text>
<line x1="85.60" y1="331.32" x2="319.40" y2="331.32" stroke="#d8d8d8" stroke-width="0.7" />
<text x="69.04" y="333.52" font-size="6.1" fill="#2a2a2a" textLength="14.96" lengthAdjust="spacingAndGlyphs" >40.00</text>
<text x="322.00" y="333.52" font-size="6.1" fill="#2a2a2a" textLength="18.28" lengthAdjust="spacingAndGlyphs" >800.00</text>
<line x1="85.60" y1="320.96" x2="319.40" y2="320.96" stroke="#d8d8d8" stroke-width="0.7" />
<text x="69.04" y="323.16" font-size="6.1" fill="#2a2a2a" textLength="14.96" lengthAdjust="spacingAndGlyphs" >45.00</text>
<text x="322.00" y="323.16" font-size="6.1" fill="#2a2a2a" textLength="18.28" lengthAdjust="spacingAndGlyphs" >900.00</text>
<line x1="85.60" y1="310.60" x2="319.40" y2="310.60" stroke="#d8d8d8" stroke-width="0.7" />
<text x="69.04" y="312.80" font-size="6.1" fill="#2a2a2a" textLength="14.96" lengthAdjust="spacingAndGlyphs" >50.00</text>
<text x="322.00" y="312.80" font-size="6.1" fill="#2a2a2a" textLength="21.61" lengthAdjust="spacingAndGlyphs" >1000.00</text>
<line x1="85.60" y1="310.60" x2="85.60" y2="414.20" stroke="#d8d8d8" stroke-width="0.7" />
<text x="80.08" y="421.10" font-size="6.1" fill="#2a2a2a" textLength="11.63" lengthAdjust="spacingAndGlyphs" >0.00</text>
<line x1="108.98" y1="310.60" x2="108.98" y2="414.20" stroke="#d8d8d8" stroke-width="0.7" />
<text x="103.46" y="421.10" font-size="6.1" fill="#2a2a2a" textLength="11.63" lengthAdjust="spacingAndGlyphs" >2.00</text>
<line x1="132.36" y1="310.60" x2="132.36" y2="414.20" stroke="#d8d8d8" stroke-width="0.7" />
<text x="126.84" y="421.10" font-size="6.1" fill="#2a2a2a" textLength="11.63" lengthAdjust="spacingAndGlyphs" >4.00</text>
<line x1="155.74" y1="310.60" x2="155.74" y2="414.20" stroke="#d8d8d8" stroke-width="0.7" />
<text x="150.22" y="421.10" font-size="6.1" fill="#2a2a2a" textLength="11.63" lengthAdjust="spacingAndGlyphs" >6.00</text>
<line x1="179.12" y1="310.60" x2="179.12" y2="414.20" stroke="#d8d8d8" stroke-width="0.7" />
<text x="173.60" y="421.10" font-size="6.1" fill="#2a2a2a" textLength="11.63" lengthAdjust="spacingAndGlyphs" >8.00</text>
<line x1="202.50" y1="310.60" x2="202.50" y2="414.20" stroke="#d8d8d8" stroke-width="0.7" />
<text x="195.32" y="421.10" font-size="6.1" fill="#2a2a2a" textLength="14.96" lengthAdjust="spacingAndGlyphs" >10.00</text>
<line x1="225.88" y1="310.60" x2="225.88" y2="414.20" stroke="#d8d8d8" stroke-width="0.7" />
<text x="218.70" y="421.10" font-size="6.1" fill="#2a2a2a" textLength="14.96" lengthAdjust="spacingAndGlyphs" >12.00</text>
<line x1="249.26" y1="310.60" x2="249.26" y2="414.20" stroke="#d8d8d8" stroke-width="0.7" />
<text x="242.08" y="421.10" font-size="6.1" fill="#2a2a2a" textLength="14.96" lengthAdjust="spacingAndGlyphs" >14.00</text>
<line x1="272.64" y1="310.60" x2="272.64" y2="414.20" stroke="#d8d8d8" stroke-width="0.7" />
<text x="265.46" y="421.10" font-size="6.1" fill="#2a2a2a" textLength="14.96" lengthAdjust="spacingAndGlyphs" >16.00</text>
<line x1="296.02" y1="310.60" x2="296.02" y2="414.20" stroke="#d8d8d8" stroke-width="0.7" />
<text x="288.84" y="421.10" font-size="6.1" fill="#2a2a2a" textLength="14.96" lengthAdjust="spacingAndGlyphs" >18.00</text>
<line x1="319.40" y1="310.60" x2="319.40" y2="414.20" stroke="#d8d8d8" stroke-width="0.7" />
<text x="312.22" y="421.10" font-size="6.1" fill="#2a2a2a" textLength="14.96" lengthAdjust="spacingAndGlyphs" >20.00</text>
<polyline points="85.60,310.60 85.60,414.20 319.40,414.20 319.40,310.60" fill="none" stroke="#9a9a9a" stroke-width="0.7" />
<polyline points="86.20,413.90 149.60,413.90" fill="none" stroke="#f040e8" stroke-width="1.2" />
<polyline points="92.70,414.20 149.60,384.50" fill="none" stroke="#cc3a3a" stroke-width="1.5" />
<polyline points="89.40,414.20 91.40,406.00 93.90,401.80 96.80,403.20 101.00,404.90 108.00,405.60 115.60,405.90 126.00,405.70 132.30,405.40 138.60,404.30 149.60,404.00" fill="none" stroke="#f040e8" stroke-width="1.4" stroke-linejoin="round"/>
<polyline points="89.30,414.20 91.60,394.00 93.30,359.50 95.40,335.00 96.80,329.40 101.50,322.00 104.50,321.20 109.60,320.70 149.60,320.70" fill="none" stroke="#2f8f8f" stroke-width="1.5" stroke-linejoin="round"/>
</g>
<rect x="67.20" y="422.30" width="276.60" height="135.60" fill="#ffffff" />
<g transform="translate(0.00,134.40)">
<g transform="translate(70,292.9)" fill="none"><path d="M1.2 6.2 L4 1 L8.4 0.8 L8.4 6.2Z" fill="#dfe6f4"/><path d="M0.7 0 L0.7 6.7 L9.4 6.7" stroke="#2a2a4a" stroke-width="0.8"/><path d="M1 6.2 Q3.4 1.4 8 0.8" stroke="#3a46c8" stroke-width="0.9"/><path d="M1 6.4 L5 2.6 L8.8 3.2" stroke="#c83c3c" stroke-width="0.8"/></g>
<text x="165.60" y="299.30" font-size="8.3" fill="#0e8080" font-weight="bold" textLength="79.60" lengthAdjust="spacingAndGlyphs" >Reactor 3 Temp</text>
<line x1="82.60" y1="303.80" x2="90.40" y2="303.80" stroke="#cc3a3a" stroke-width="1.1" />
<text x="92.20" y="305.80" font-size="5.8" fill="#3c3c3c" textLength="12.00" lengthAdjust="spacingAndGlyphs" >R3T</text>
<line x1="107.60" y1="303.80" x2="115.60" y2="303.80" stroke="#3c3ce0" stroke-width="1.1" />
<text x="117.20" y="305.80" font-size="5.8" fill="#3c3c3c" textLength="11.60" lengthAdjust="spacingAndGlyphs" >Z3T</text>
<line x1="132.80" y1="303.80" x2="140.80" y2="303.80" stroke="#f040e8" stroke-width="1.1" />
<text x="142.80" y="305.80" font-size="5.8" fill="#3c3c3c" textLength="12.00" lengthAdjust="spacingAndGlyphs" >H3P</text>
<line x1="283.60" y1="303.80" x2="291.00" y2="303.80" stroke="#2f8f8f" stroke-width="1.1" />
<text x="292.80" y="305.80" font-size="5.8" fill="#3c3c3c" textLength="12.70" lengthAdjust="spacingAndGlyphs" >S3S</text>
<line x1="308.00" y1="303.80" x2="315.80" y2="303.80" stroke="#f040e8" stroke-width="1.1" />
<text x="318.10" y="305.80" font-size="5.8" fill="#3c3c3c" textLength="12.90" lengthAdjust="spacingAndGlyphs" >R3P</text>
<line x1="85.60" y1="414.20" x2="319.40" y2="414.20" stroke="#d8d8d8" stroke-width="0.7" />
<text x="72.37" y="416.40" font-size="6.1" fill="#2a2a2a" textLength="11.63" lengthAdjust="spacingAndGlyphs" >0.00</text>
<text x="322.00" y="416.40" font-size="6.1" fill="#2a2a2a" textLength="11.63" lengthAdjust="spacingAndGlyphs" >0.00</text>
<line x1="85.60" y1="403.84" x2="319.40" y2="403.84" stroke="#d8d8d8" stroke-width="0.7" />
<text x="72.37" y="406.04" font-size="6.1" fill="#2a2a2a" textLength="11.63" lengthAdjust="spacingAndGlyphs" >5.00</text>
<text x="322.00" y="406.04" font-size="6.1" fill="#2a2a2a" textLength="18.28" lengthAdjust="spacingAndGlyphs" >100.00</text>
<line x1="85.60" y1="393.48" x2="319.40" y2="393.48" stroke="#d8d8d8" stroke-width="0.7" />
<text x="69.04" y="395.68" font-size="6.1" fill="#2a2a2a" textLength="14.96" lengthAdjust="spacingAndGlyphs" >10.00</text>
<text x="322.00" y="395.68" font-size="6.1" fill="#2a2a2a" textLength="18.28" lengthAdjust="spacingAndGlyphs" >200.00</text>
<line x1="85.60" y1="383.12" x2="319.40" y2="383.12" stroke="#d8d8d8" stroke-width="0.7" />
<text x="69.04" y="385.32" font-size="6.1" fill="#2a2a2a" textLength="14.96" lengthAdjust="spacingAndGlyphs" >15.00</text>
<text x="322.00" y="385.32" font-size="6.1" fill="#2a2a2a" textLength="18.28" lengthAdjust="spacingAndGlyphs" >300.00</text>
<line x1="85.60" y1="372.76" x2="319.40" y2="372.76" stroke="#d8d8d8" stroke-width="0.7" />
<text x="69.04" y="374.96" font-size="6.1" fill="#2a2a2a" textLength="14.96" lengthAdjust="spacingAndGlyphs" >20.00</text>
<text x="322.00" y="374.96" font-size="6.1" fill="#2a2a2a" textLength="18.28" lengthAdjust="spacingAndGlyphs" >400.00</text>
<line x1="85.60" y1="362.40" x2="319.40" y2="362.40" stroke="#d8d8d8" stroke-width="0.7" />
<text x="69.04" y="364.60" font-size="6.1" fill="#2a2a2a" textLength="14.96" lengthAdjust="spacingAndGlyphs" >25.00</text>
<text x="322.00" y="364.60" font-size="6.1" fill="#2a2a2a" textLength="18.28" lengthAdjust="spacingAndGlyphs" >500.00</text>
<line x1="85.60" y1="352.04" x2="319.40" y2="352.04" stroke="#d8d8d8" stroke-width="0.7" />
<text x="69.04" y="354.24" font-size="6.1" fill="#2a2a2a" textLength="14.96" lengthAdjust="spacingAndGlyphs" >30.00</text>
<text x="322.00" y="354.24" font-size="6.1" fill="#2a2a2a" textLength="18.28" lengthAdjust="spacingAndGlyphs" >600.00</text>
<line x1="85.60" y1="341.68" x2="319.40" y2="341.68" stroke="#d8d8d8" stroke-width="0.7" />
<text x="69.04" y="343.88" font-size="6.1" fill="#2a2a2a" textLength="14.96" lengthAdjust="spacingAndGlyphs" >35.00</text>
<text x="322.00" y="343.88" font-size="6.1" fill="#2a2a2a" textLength="18.28" lengthAdjust="spacingAndGlyphs" >700.00</text>
<line x1="85.60" y1="331.32" x2="319.40" y2="331.32" stroke="#d8d8d8" stroke-width="0.7" />
<text x="69.04" y="333.52" font-size="6.1" fill="#2a2a2a" textLength="14.96" lengthAdjust="spacingAndGlyphs" >40.00</text>
<text x="322.00" y="333.52" font-size="6.1" fill="#2a2a2a" textLength="18.28" lengthAdjust="spacingAndGlyphs" >800.00</text>
<line x1="85.60" y1="320.96" x2="319.40" y2="320.96" stroke="#d8d8d8" stroke-width="0.7" />
<text x="69.04" y="323.16" font-size="6.1" fill="#2a2a2a" textLength="14.96" lengthAdjust="spacingAndGlyphs" >45.00</text>
<text x="322.00" y="323.16" font-size="6.1" fill="#2a2a2a" textLength="18.28" lengthAdjust="spacingAndGlyphs" >900.00</text>
<line x1="85.60" y1="310.60" x2="319.40" y2="310.60" stroke="#d8d8d8" stroke-width="0.7" />
<text x="69.04" y="312.80" font-size="6.1" fill="#2a2a2a" textLength="14.96" lengthAdjust="spacingAndGlyphs" >50.00</text>
<text x="322.00" y="312.80" font-size="6.1" fill="#2a2a2a" textLength="21.61" lengthAdjust="spacingAndGlyphs" >1000.00</text>
<line x1="85.60" y1="310.60" x2="85.60" y2="414.20" stroke="#d8d8d8" stroke-width="0.7" />
<text x="80.08" y="421.10" font-size="6.1" fill="#2a2a2a" textLength="11.63" lengthAdjust="spacingAndGlyphs" >0.00</text>
<line x1="108.98" y1="310.60" x2="108.98" y2="414.20" stroke="#d8d8d8" stroke-width="0.7" />
<text x="103.46" y="421.10" font-size="6.1" fill="#2a2a2a" textLength="11.63" lengthAdjust="spacingAndGlyphs" >2.00</text>
<line x1="132.36" y1="310.60" x2="132.36" y2="414.20" stroke="#d8d8d8" stroke-width="0.7" />
<text x="126.84" y="421.10" font-size="6.1" fill="#2a2a2a" textLength="11.63" lengthAdjust="spacingAndGlyphs" >4.00</text>
<line x1="155.74" y1="310.60" x2="155.74" y2="414.20" stroke="#d8d8d8" stroke-width="0.7" />
<text x="150.22" y="421.10" font-size="6.1" fill="#2a2a2a" textLength="11.63" lengthAdjust="spacingAndGlyphs" >6.00</text>
<line x1="179.12" y1="310.60" x2="179.12" y2="414.20" stroke="#d8d8d8" stroke-width="0.7" />
<text x="173.60" y="421.10" font-size="6.1" fill="#2a2a2a" textLength="11.63" lengthAdjust="spacingAndGlyphs" >8.00</text>
<line x1="202.50" y1="310.60" x2="202.50" y2="414.20" stroke="#d8d8d8" stroke-width="0.7" />
<text x="195.32" y="421.10" font-size="6.1" fill="#2a2a2a" textLength="14.96" lengthAdjust="spacingAndGlyphs" >10.00</text>
<line x1="225.88" y1="310.60" x2="225.88" y2="414.20" stroke="#d8d8d8" stroke-width="0.7" />
<text x="218.70" y="421.10" font-size="6.1" fill="#2a2a2a" textLength="14.96" lengthAdjust="spacingAndGlyphs" >12.00</text>
<line x1="249.26" y1="310.60" x2="249.26" y2="414.20" stroke="#d8d8d8" stroke-width="0.7" />
<text x="242.08" y="421.10" font-size="6.1" fill="#2a2a2a" textLength="14.96" lengthAdjust="spacingAndGlyphs" >14.00</text>
<line x1="272.64" y1="310.60" x2="272.64" y2="414.20" stroke="#d8d8d8" stroke-width="0.7" />
<text x="265.46" y="421.10" font-size="6.1" fill="#2a2a2a" textLength="14.96" lengthAdjust="spacingAndGlyphs" >16.00</text>
<line x1="296.02" y1="310.60" x2="296.02" y2="414.20" stroke="#d8d8d8" stroke-width="0.7" />
<text x="288.84" y="421.10" font-size="6.1" fill="#2a2a2a" textLength="14.96" lengthAdjust="spacingAndGlyphs" >18.00</text>
<line x1="319.40" y1="310.60" x2="319.40" y2="414.20" stroke="#d8d8d8" stroke-width="0.7" />
<text x="312.22" y="421.10" font-size="6.1" fill="#2a2a2a" textLength="14.96" lengthAdjust="spacingAndGlyphs" >20.00</text>
<polyline points="85.60,310.60 85.60,414.20 319.40,414.20 319.40,310.60" fill="none" stroke="#9a9a9a" stroke-width="0.7" />
<polyline points="86.20,413.90 149.60,413.90" fill="none" stroke="#f040e8" stroke-width="1.2" />
<polyline points="92.70,414.20 149.60,384.50" fill="none" stroke="#cc3a3a" stroke-width="1.5" />
<polyline points="89.40,414.20 91.40,406.00 93.90,401.80 96.80,403.20 101.00,404.90 108.00,405.60 115.60,405.90 126.00,405.70 132.30,405.40 138.60,404.30 149.60,404.00" fill="none" stroke="#f040e8" stroke-width="1.4" stroke-linejoin="round"/>
<polyline points="89.30,414.20 91.60,394.00 93.30,359.50 95.40,335.00 96.80,329.40 101.50,322.00 104.50,321.20 109.60,320.70 149.60,320.70" fill="none" stroke="#2f8f8f" stroke-width="1.5" stroke-linejoin="round"/>
</g>
<rect x="345.40" y="422.30" width="279.40" height="135.60" fill="#ffffff" />
<g transform="translate(280.40,134.40)">
<g transform="translate(70,292.9)" fill="none"><path d="M1.2 6.2 L4 1 L8.4 0.8 L8.4 6.2Z" fill="#dfe6f4"/><path d="M0.7 0 L0.7 6.7 L9.4 6.7" stroke="#2a2a4a" stroke-width="0.8"/><path d="M1 6.2 Q3.4 1.4 8 0.8" stroke="#3a46c8" stroke-width="0.9"/><path d="M1 6.4 L5 2.6 L8.8 3.2" stroke="#c83c3c" stroke-width="0.8"/></g>
<text x="165.60" y="299.30" font-size="8.3" fill="#0e8080" font-weight="bold" textLength="79.60" lengthAdjust="spacingAndGlyphs" >Reactor 4 Temp</text>
<line x1="82.60" y1="303.80" x2="90.40" y2="303.80" stroke="#cc3a3a" stroke-width="1.1" />
<text x="92.20" y="305.80" font-size="5.8" fill="#3c3c3c" textLength="12.00" lengthAdjust="spacingAndGlyphs" >R4T</text>
<line x1="107.60" y1="303.80" x2="115.60" y2="303.80" stroke="#3c3ce0" stroke-width="1.1" />
<text x="117.20" y="305.80" font-size="5.8" fill="#3c3c3c" textLength="11.60" lengthAdjust="spacingAndGlyphs" >Z4T</text>
<line x1="132.80" y1="303.80" x2="140.80" y2="303.80" stroke="#f040e8" stroke-width="1.1" />
<text x="142.80" y="305.80" font-size="5.8" fill="#3c3c3c" textLength="12.00" lengthAdjust="spacingAndGlyphs" >H4P</text>
<line x1="283.60" y1="303.80" x2="291.00" y2="303.80" stroke="#2f8f8f" stroke-width="1.1" />
<text x="292.80" y="305.80" font-size="5.8" fill="#3c3c3c" textLength="12.70" lengthAdjust="spacingAndGlyphs" >S4S</text>
<line x1="308.00" y1="303.80" x2="315.80" y2="303.80" stroke="#f040e8" stroke-width="1.1" />
<text x="318.10" y="305.80" font-size="5.8" fill="#3c3c3c" textLength="12.90" lengthAdjust="spacingAndGlyphs" >R4P</text>
<line x1="85.60" y1="414.20" x2="319.40" y2="414.20" stroke="#d8d8d8" stroke-width="0.7" />
<text x="72.37" y="416.40" font-size="6.1" fill="#2a2a2a" textLength="11.63" lengthAdjust="spacingAndGlyphs" >0.00</text>
<text x="322.00" y="416.40" font-size="6.1" fill="#2a2a2a" textLength="11.63" lengthAdjust="spacingAndGlyphs" >0.00</text>
<line x1="85.60" y1="403.84" x2="319.40" y2="403.84" stroke="#d8d8d8" stroke-width="0.7" />
<text x="72.37" y="406.04" font-size="6.1" fill="#2a2a2a" textLength="11.63" lengthAdjust="spacingAndGlyphs" >5.00</text>
<text x="322.00" y="406.04" font-size="6.1" fill="#2a2a2a" textLength="18.28" lengthAdjust="spacingAndGlyphs" >100.00</text>
<line x1="85.60" y1="393.48" x2="319.40" y2="393.48" stroke="#d8d8d8" stroke-width="0.7" />
<text x="69.04" y="395.68" font-size="6.1" fill="#2a2a2a" textLength="14.96" lengthAdjust="spacingAndGlyphs" >10.00</text>
<text x="322.00" y="395.68" font-size="6.1" fill="#2a2a2a" textLength="18.28" lengthAdjust="spacingAndGlyphs" >200.00</text>
<line x1="85.60" y1="383.12" x2="319.40" y2="383.12" stroke="#d8d8d8" stroke-width="0.7" />
<text x="69.04" y="385.32" font-size="6.1" fill="#2a2a2a" textLength="14.96" lengthAdjust="spacingAndGlyphs" >15.00</text>
<text x="322.00" y="385.32" font-size="6.1" fill="#2a2a2a" textLength="18.28" lengthAdjust="spacingAndGlyphs" >300.00</text>
<line x1="85.60" y1="372.76" x2="319.40" y2="372.76" stroke="#d8d8d8" stroke-width="0.7" />
<text x="69.04" y="374.96" font-size="6.1" fill="#2a2a2a" textLength="14.96" lengthAdjust="spacingAndGlyphs" >20.00</text>
<text x="322.00" y="374.96" font-size="6.1" fill="#2a2a2a" textLength="18.28" lengthAdjust="spacingAndGlyphs" >400.00</text>
<line x1="85.60" y1="362.40" x2="319.40" y2="362.40" stroke="#d8d8d8" stroke-width="0.7" />
<text x="69.04" y="364.60" font-size="6.1" fill="#2a2a2a" textLength="14.96" lengthAdjust="spacingAndGlyphs" >25.00</text>
<text x="322.00" y="364.60" font-size="6.1" fill="#2a2a2a" textLength="18.28" lengthAdjust="spacingAndGlyphs" >500.00</text>
<line x1="85.60" y1="352.04" x2="319.40" y2="352.04" stroke="#d8d8d8" stroke-width="0.7" />
<text x="69.04" y="354.24" font-size="6.1" fill="#2a2a2a" textLength="14.96" lengthAdjust="spacingAndGlyphs" >30.00</text>
<text x="322.00" y="354.24" font-size="6.1" fill="#2a2a2a" textLength="18.28" lengthAdjust="spacingAndGlyphs" >600.00</text>
<line x1="85.60" y1="341.68" x2="319.40" y2="341.68" stroke="#d8d8d8" stroke-width="0.7" />
<text x="69.04" y="343.88" font-size="6.1" fill="#2a2a2a" textLength="14.96" lengthAdjust="spacingAndGlyphs" >35.00</text>
<text x="322.00" y="343.88" font-size="6.1" fill="#2a2a2a" textLength="18.28" lengthAdjust="spacingAndGlyphs" >700.00</text>
<line x1="85.60" y1="331.32" x2="319.40" y2="331.32" stroke="#d8d8d8" stroke-width="0.7" />
<text x="69.04" y="333.52" font-size="6.1" fill="#2a2a2a" textLength="14.96" lengthAdjust="spacingAndGlyphs" >40.00</text>
<text x="322.00" y="333.52" font-size="6.1" fill="#2a2a2a" textLength="18.28" lengthAdjust="spacingAndGlyphs" >800.00</text>
<line x1="85.60" y1="320.96" x2="319.40" y2="320.96" stroke="#d8d8d8" stroke-width="0.7" />
<text x="69.04" y="323.16" font-size="6.1" fill="#2a2a2a" textLength="14.96" lengthAdjust="spacingAndGlyphs" >45.00</text>
<text x="322.00" y="323.16" font-size="6.1" fill="#2a2a2a" textLength="18.28" lengthAdjust="spacingAndGlyphs" >900.00</text>
<line x1="85.60" y1="310.60" x2="319.40" y2="310.60" stroke="#d8d8d8" stroke-width="0.7" />
<text x="69.04" y="312.80" font-size="6.1" fill="#2a2a2a" textLength="14.96" lengthAdjust="spacingAndGlyphs" >50.00</text>
<text x="322.00" y="312.80" font-size="6.1" fill="#2a2a2a" textLength="21.61" lengthAdjust="spacingAndGlyphs" >1000.00</text>
<line x1="85.60" y1="310.60" x2="85.60" y2="414.20" stroke="#d8d8d8" stroke-width="0.7" />
<text x="80.08" y="421.10" font-size="6.1" fill="#2a2a2a" textLength="11.63" lengthAdjust="spacingAndGlyphs" >0.00</text>
<line x1="108.98" y1="310.60" x2="108.98" y2="414.20" stroke="#d8d8d8" stroke-width="0.7" />
<text x="103.46" y="421.10" font-size="6.1" fill="#2a2a2a" textLength="11.63" lengthAdjust="spacingAndGlyphs" >2.00</text>
<line x1="132.36" y1="310.60" x2="132.36" y2="414.20" stroke="#d8d8d8" stroke-width="0.7" />
<text x="126.84" y="421.10" font-size="6.1" fill="#2a2a2a" textLength="11.63" lengthAdjust="spacingAndGlyphs" >4.00</text>
<line x1="155.74" y1="310.60" x2="155.74" y2="414.20" stroke="#d8d8d8" stroke-width="0.7" />
<text x="150.22" y="421.10" font-size="6.1" fill="#2a2a2a" textLength="11.63" lengthAdjust="spacingAndGlyphs" >6.00</text>
<line x1="179.12" y1="310.60" x2="179.12" y2="414.20" stroke="#d8d8d8" stroke-width="0.7" />
<text x="173.60" y="421.10" font-size="6.1" fill="#2a2a2a" textLength="11.63" lengthAdjust="spacingAndGlyphs" >8.00</text>
<line x1="202.50" y1="310.60" x2="202.50" y2="414.20" stroke="#d8d8d8" stroke-width="0.7" />
<text x="195.32" y="421.10" font-size="6.1" fill="#2a2a2a" textLength="14.96" lengthAdjust="spacingAndGlyphs" >10.00</text>
<line x1="225.88" y1="310.60" x2="225.88" y2="414.20" stroke="#d8d8d8" stroke-width="0.7" />
<text x="218.70" y="421.10" font-size="6.1" fill="#2a2a2a" textLength="14.96" lengthAdjust="spacingAndGlyphs" >12.00</text>
<line x1="249.26" y1="310.60" x2="249.26" y2="414.20" stroke="#d8d8d8" stroke-width="0.7" />
<text x="242.08" y="421.10" font-size="6.1" fill="#2a2a2a" textLength="14.96" lengthAdjust="spacingAndGlyphs" >14.00</text>
<line x1="272.64" y1="310.60" x2="272.64" y2="414.20" stroke="#d8d8d8" stroke-width="0.7" />
<text x="265.46" y="421.10" font-size="6.1" fill="#2a2a2a" textLength="14.96" lengthAdjust="spacingAndGlyphs" >16.00</text>
<line x1="296.02" y1="310.60" x2="296.02" y2="414.20" stroke="#d8d8d8" stroke-width="0.7" />
<text x="288.84" y="421.10" font-size="6.1" fill="#2a2a2a" textLength="14.96" lengthAdjust="spacingAndGlyphs" >18.00</text>
<line x1="319.40" y1="310.60" x2="319.40" y2="414.20" stroke="#d8d8d8" stroke-width="0.7" />
<text x="312.22" y="421.10" font-size="6.1" fill="#2a2a2a" textLength="14.96" lengthAdjust="spacingAndGlyphs" >20.00</text>
<polyline points="85.60,310.60 85.60,414.20 319.40,414.20 319.40,310.60" fill="none" stroke="#9a9a9a" stroke-width="0.7" />
<polyline points="86.20,413.90 149.60,413.90" fill="none" stroke="#f040e8" stroke-width="1.2" />
<polyline points="92.70,414.20 149.60,384.50" fill="none" stroke="#cc3a3a" stroke-width="1.5" />
<polyline points="89.40,414.20 91.40,406.00 93.90,401.80 96.80,403.20 101.00,404.90 108.00,405.60 115.60,405.90 126.00,405.70 132.30,405.40 138.60,404.30 149.60,404.00" fill="none" stroke="#f040e8" stroke-width="1.4" stroke-linejoin="round"/>
<polyline points="89.30,414.20 91.60,394.00 93.30,359.50 95.40,335.00 96.80,329.40 101.50,322.00 104.50,321.20 109.60,320.70 149.60,320.70" fill="none" stroke="#2f8f8f" stroke-width="1.5" stroke-linejoin="round"/>
</g>
<line x1="66.60" y1="290.80" x2="625.20" y2="290.80" stroke="#6e6e6e" stroke-width="0.9" />
<line x1="67.10" y1="290.40" x2="67.10" y2="558.20" stroke="#666666" stroke-width="1.1" />
<line x1="343.90" y1="291.00" x2="343.90" y2="558.00" stroke="#7c7c7c" stroke-width="1.3" />
<line x1="67.00" y1="421.90" x2="625.00" y2="421.90" stroke="#7c7c7c" stroke-width="1.3" />
<line x1="345.00" y1="291.00" x2="345.00" y2="558.00" stroke="#d0d0d0" stroke-width="0.7" />
<line x1="67.00" y1="423.00" x2="625.00" y2="423.00" stroke="#d0d0d0" stroke-width="0.7" />
<line x1="67.00" y1="558.20" x2="625.20" y2="558.20" stroke="#a0a0a0" stroke-width="0.8" />
</svg>
</body></html>
